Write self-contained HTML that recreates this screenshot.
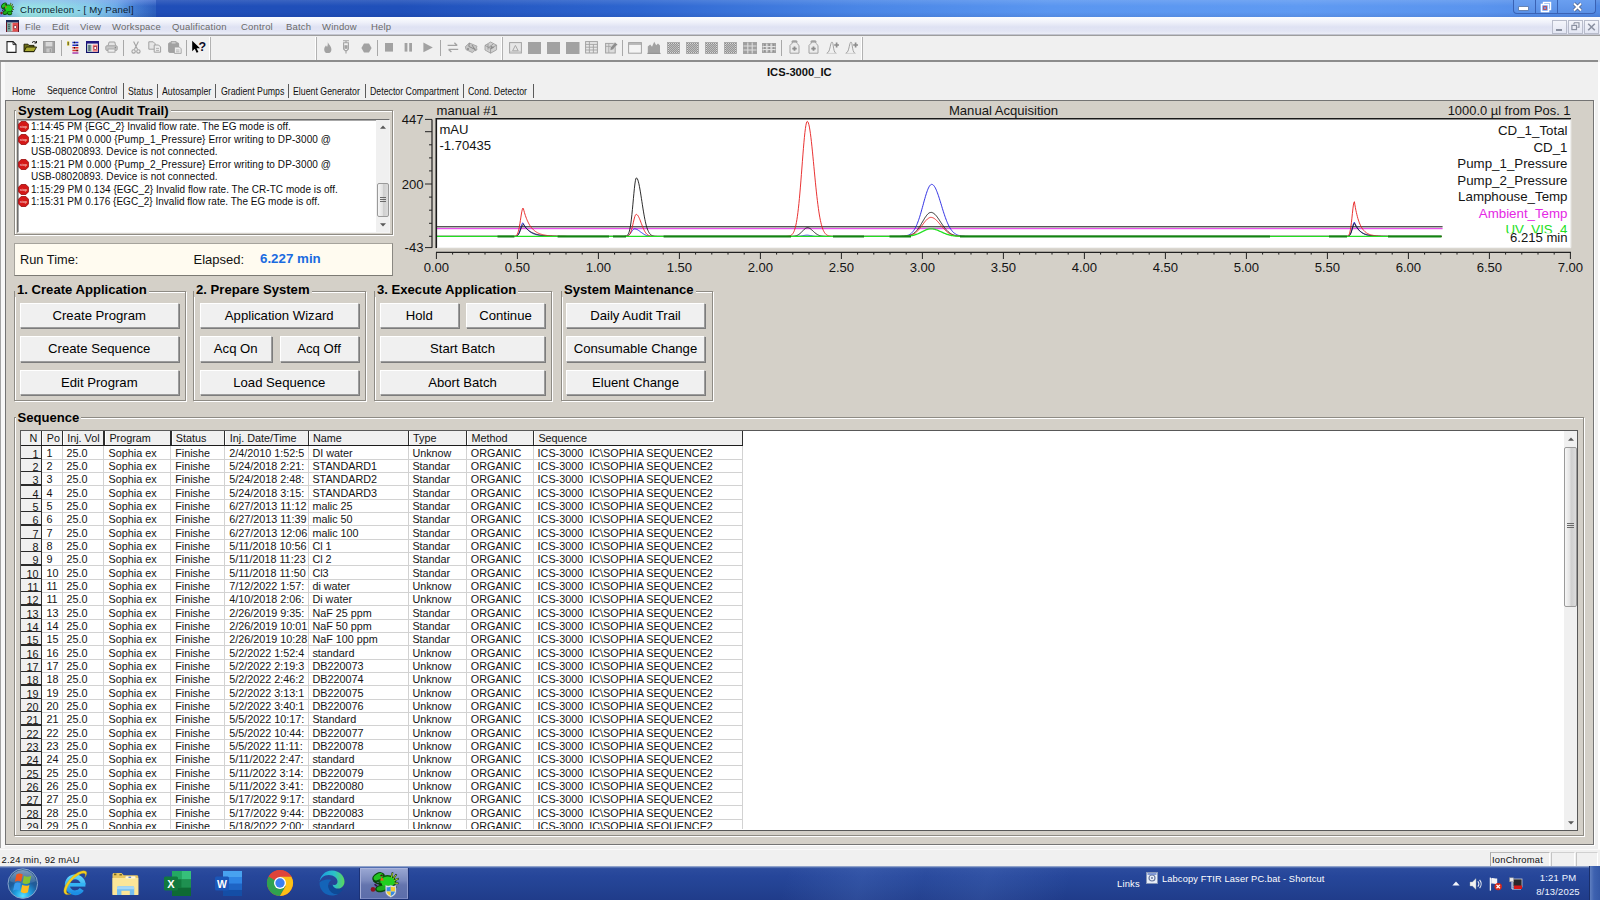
<!DOCTYPE html>
<html lang="en">
<head>
<meta charset="utf-8">
<title>Chromeleon - [ My Panel]</title>
<style>
*{box-sizing:border-box;margin:0;padding:0}
html,body{width:1600px;height:900px;overflow:hidden;background:#f0f0f0}
body{position:relative;font-family:"Liberation Sans",Arial,sans-serif;color:#000;font-size:10px}
.abs,.abs>*{position:absolute}
div,span,svg{position:absolute;white-space:nowrap}
/* ---------- title bar ---------- */
#title{left:0;top:0;width:1600px;height:17px;background:linear-gradient(90deg,#2858c2 0px,#204eb8 150px,#2050ba 400px,#2e66d0 640px,#4a86e6 860px,#5a96f0 1050px,#5f9af2 1300px,#5a94ee 1480px,#4f88e4 1600px)}
#title .glow{left:0;top:0;width:156px;height:17px;background:linear-gradient(180deg,rgba(110,150,235,.45) 0,rgba(120,190,235,.15) 6px,rgba(150,240,225,.12) 17px),linear-gradient(90deg,#6e88e0 0,#84c0e8 9px,#9ee6e6 22px,#98e0e6 60px,#86caea 92px,rgba(112,174,236,.92) 116px,rgba(80,140,225,.5) 136px,rgba(50,100,205,0) 154px)}
#title .shade{left:0;top:0;width:1600px;height:17px;background:linear-gradient(180deg,rgba(255,255,255,.12) 0,rgba(255,255,255,0) 6px,rgba(0,0,40,0) 12px,rgba(0,0,60,.10) 18px)}
#title .txt{left:20px;top:2.500px;font-size:9.6px;line-height:13px;color:#0c1c30;letter-spacing:.21px}
/* ---------- menu bar ---------- */
#menu{left:0;top:17px;width:1600px;height:18px;background:linear-gradient(180deg,#fcfdff 0,#f0f2fa 5px,#dfe2f3 10px,#e2e5f4 14px,#eef0f8 18px)}
#menu span{top:3.500px;font-size:9.5px;line-height:12px;color:#6a6a6a;letter-spacing:.18px}
#menuline{left:0;top:34px;width:1600px;height:3px;background:linear-gradient(180deg,#c2c4d0 0,#c2c4d0 1px,#9e9e9e 1px,#9e9e9e 2px,#fbfbfb 2px)}
/* ---------- toolbar ---------- */
#tb{left:0;top:36px;width:1600px;height:25px;background:#f0f0f0}
#tbline{left:0;top:60px;width:1598px;height:2px;background:#8c8c8c}
.tsep{top:40px;width:1px;height:16px;background:#a8a8a8}
.tsplit{top:37px;width:1px;height:23px;background:#b2b2b2;box-shadow:-1px 0 0 #fff}
/* ---------- panel ---------- */
#pan{left:2px;top:62px;width:1596px;height:787px;background:#f0f0f0}
#edgeL{left:0;top:62px;width:5px;height:786px;background:linear-gradient(90deg,#a4a4a4 0,#a4a4a4 1.4px,#f8f8f8 1.5px)}
#main{left:5px;top:100px;width:1589px;height:745px;background:#d4d0c8;border:1px solid #747474;box-shadow:1px 1px 0 #fff}
.tab{top:85px;font-size:10.6px;line-height:12px;color:#111;transform-origin:0 0;transform:scaleX(.828)}
.tabsep{top:84px;width:1px;height:14px;background:#5a5a5a}
.gb{border:1px solid #8e8b84;box-shadow:1px 1px 0 #fff, inset 1px 1px 0 #fff}
.gbt{font-weight:bold;font-size:13.1px;line-height:15px;background:#d4d0c8;padding:0 2px 0 2px}
.btn{background:#f0f0f0;border-top:1px solid #fff;border-left:1px solid #fff;border-right:1px solid #9c9c9c;border-bottom:1px solid #9c9c9c;box-shadow:1px 1px 0 #7c7c7c;font-size:13.15px;text-align:center;color:#000}
.btn span{position:static}
.lg{left:31px;font-size:10px;line-height:12.5px;color:#0c0c0c}
#tbl span,#tbl div{font-size:10.8px;line-height:13.33px;color:#141414}
#tbl .hl{left:20px;width:701.500px;height:1px;background:#d2d2d2}
#tbl .hd{left:0;width:20.500px;height:1.400px;background:#2a2a2a}
#tbl .vl{top:14.500px;width:1px;height:400px;background:#d2d2d2}
#tbl .vh{top:0;width:1.300px;height:14.500px;background:#2e2e2e;box-shadow:1px 0 0 #fff}
#tbl .vd{top:14px;width:1px;height:400px;background:#2e2e2e}
#tbl .th{top:1.200px}
#tbl .tr{left:0;width:722px;height:13.33px}
#tbl .tr span{top:.4px}
#tbl .tr .rn{left:0;width:17.500px;text-align:right;top:1.600px}
#tbl i{font-style:normal;color:transparent}
/* ---------- status/taskbar ---------- */
#status{left:0;top:849px;width:1600px;height:18px;background:#f0f0f0}
#task{left:0;top:866px;width:1600px;height:34px;background:linear-gradient(180deg,#b4c0d8 0,#5d78b6 1.2px,#2c4c9e 2.600px,#26469a 10px,#234292 22px,#203c8a 34px)}
</style>
</head>
<body>
<!-- ================= TITLE BAR ================= -->
<div id="title">
  <div class="glow"></div><div class="shade"></div>
  <svg style="left:0;top:1.500px" width="14.500" height="14.500" viewBox="0 0 30 24" preserveAspectRatio="none">
  <g>
    <ellipse cx="8.500" cy="6.200" rx="6.600" ry="4.600" transform="rotate(-28 8.500 6.200)" fill="#0a4a0c"/>
    <ellipse cx="17.400" cy="11" rx="9" ry="7" fill="#0c5a0e"/>
    <ellipse cx="11.500" cy="17.400" rx="6.600" ry="3.800" transform="rotate(-12 11.500 17.400)" fill="#0a4a0c"/>
    <path d="M21 8l1.600-6.600M22.500 8.500l4-5.200M23.500 10l5.200-2.600M23.500 12l5 .4M22.500 14l4 2.400" stroke="#0c300c" stroke-width="1.700"/>
    <path d="M21 8l1.500-5.800M22.500 8.500l3.600-4.600M23.500 10l4.600-2.200M23.500 12l4.400.4" stroke="#c8ec28" stroke-width=".9"/>
    <ellipse cx="8.300" cy="5.800" rx="5" ry="2.900" transform="rotate(-28 8.300 5.800)" fill="#22c422"/>
    <ellipse cx="17.600" cy="10.800" rx="7.200" ry="5.400" fill="#20d020"/>
    <ellipse cx="11.500" cy="17.200" rx="5" ry="2.300" transform="rotate(-12 11.500 17.200)" fill="#1cac1c"/>
    <path d="M3.400 9.600c2.200 2.600 5 3.800 8.600 3.800" fill="none" stroke="#0a3a0a" stroke-width="1.600"/>
    <path d="M10 9.400l1.900-3.600 1.900 3.600z" fill="#f05a18"/>
    <path d="M9.800 5.200l1.600-2 1.800 1.800z" fill="#501010"/>
    <circle cx="3" cy="18.400" r="2.300" fill="#8c1422"/>
    <path d="M4.600 13.200l2.400 2.200" stroke="#3a1450" stroke-width="1.800"/>
  </g>
    <ellipse cx="20" cy="18.500" rx="5" ry="3.600" fill="#0c5a0e"/><ellipse cx="20" cy="18" rx="3.600" ry="2.400" fill="#1cb41c"/>
  </svg>
  <span class="txt">Chromeleon - [ My Panel]</span>
  <!-- caption buttons -->
  <div style="left:1513px;top:0;width:83px;height:14px;border:1px solid #3a62b4;border-top:none;border-radius:0 0 4px 4px;background:linear-gradient(180deg,#6a9ff0,#5a90e6)"></div>
  <div style="left:1535px;top:0;width:1px;height:14px;background:#3a62b4"></div>
  <div style="left:1557px;top:0;width:1px;height:14px;background:#3a62b4"></div>
  <div style="left:1519px;top:7px;width:9px;height:3px;background:#fff;border:0;box-shadow:0 0 0 .6px #6a7890"></div>
  <svg style="left:1540px;top:1px" width="12" height="12" viewBox="0 0 12 12"><rect x="3.5" y="1.5" width="7" height="7" fill="none" stroke="#fff" stroke-width="1.4"/><rect x="1.5" y="3.5" width="7" height="7" fill="#6a9af0" stroke="#fff" stroke-width="1.6"/><rect x="3.6" y="5.6" width="2.8" height="2.8" fill="none" stroke="#c04848" stroke-width=".9"/></svg>
  <svg style="left:1572px;top:2px" width="11" height="10" viewBox="0 0 11 10"><path d="M2 1.500l7 7M9 1.500l-7 7" stroke="#4a5c82" stroke-width="3.400"/><path d="M2 1.500l7 7M9 1.500l-7 7" stroke="#fff" stroke-width="2"/></svg>
</div>
<!-- ================= MENU BAR ================= -->
<div id="menu">
  <svg style="left:6px;top:2.500px" width="13" height="12.500" viewBox="0 0 13 13" preserveAspectRatio="none">
    <rect x=".5" y=".5" width="12" height="12" fill="#e8e0e0" stroke="#6a1020"/>
    <rect x="0" y="0" width="13" height="2.6" fill="#1a2a58"/>
    <rect x="1" y="3" width="4.5" height="9" fill="#7fa7a0"/>
    <rect x="6.5" y="3" width="5.5" height="9" fill="#e05050"/>
    <rect x="8" y="6" width="2.5" height="3" fill="#fff" stroke="#701020" stroke-width=".6"/>
    <path d="M2 5h2M2 7h2M2 9h2" stroke="#244" stroke-width=".8"/>
  </svg>
  <span style="left:25px">File</span>
  <span style="left:52px">Edit</span>
  <span style="left:80px">View</span>
  <span style="left:112px">Workspace</span>
  <span style="left:172px">Qualification</span>
  <span style="left:241px">Control</span>
  <span style="left:286px">Batch</span>
  <span style="left:322px">Window</span>
  <span style="left:371px">Help</span>
  <!-- MDI child buttons -->
  <div style="left:1552px;top:3px;width:15px;height:14px;border:1px solid #b8bccb;background:linear-gradient(180deg,#f4f5fb,#e3e6f3)"></div>
  <div style="left:1568px;top:3px;width:15px;height:14px;border:1px solid #b8bccb;background:linear-gradient(180deg,#f4f5fb,#e3e6f3)"></div>
  <div style="left:1584px;top:3px;width:15px;height:14px;border:1px solid #b8bccb;background:linear-gradient(180deg,#f4f5fb,#e3e6f3)"></div>
  <div style="left:1556px;top:12px;width:6px;height:1.600px;background:#8a90a0"></div>
  <svg style="left:1571px;top:5px" width="9" height="9" viewBox="0 0 9 9"><path d="M3 .8h5v4.4H6.4M3 .8v1.6" fill="none" stroke="#8a90a0" stroke-width="1.1"/><rect x=".9" y="3.4" width="4.6" height="4.2" fill="none" stroke="#8a90a0" stroke-width="1.2"/></svg>
  <svg style="left:1587px;top:6px" width="9" height="8" viewBox="0 0 9 8"><path d="M1.2 .8l6.6 6.4M7.8 .8L1.2 7.2" stroke="#8a90a0" stroke-width="1.6"/></svg>
</div>
<div id="menuline"></div>
<!-- ================= TOOLBAR ================= -->
<div id="tb"></div>
<div id="tbline"></div>
<div id="edgeL"></div>
<!-- ================= TOOLBAR ICONS ================= -->
<svg style="left:6px;top:41px" width="11" height="12" viewBox="0 0 11 12"><path d="M1 .6h6l3 3v7.8H1z" fill="#fff" stroke="#222" stroke-width="1.1"/><path d="M7 .6v3h3" fill="none" stroke="#222" stroke-width=".9"/></svg>
<svg style="left:23px;top:40px" width="15" height="13" viewBox="0 0 15 13"><path d="M1 4.2h4l1 1.2h5v6.2H1z" fill="#6e6e18" stroke="#1a1a00" stroke-width=".9"/><path d="M1 11.6l2.4-4.6h10.2l-2.6 4.6z" fill="#a8a830" stroke="#1a1a00" stroke-width=".9"/><path d="M9 2.6c1.6-1.6 3.4-1.4 4.2.2M13.4 1v2h-2" fill="none" stroke="#111" stroke-width="1"/></svg>
<svg style="left:43px;top:41px" width="12" height="12" viewBox="0 0 12 12"><rect x=".5" y=".5" width="11" height="11" fill="#a4a4a4" stroke="#9a9a9a"/><rect x="2.6" y="1" width="6.8" height="4.4" fill="#d8d8d8"/><rect x="3.4" y="7.4" width="5.4" height="4" fill="#c8c8c8"/><rect x="6.6" y="8" width="1.5" height="3" fill="#a0a0a0"/></svg>
<div class="tsep" style="left:61px"></div>
<svg style="left:66px;top:41px" width="14" height="13" viewBox="0 0 14 13"><rect x="1" y="0.4" width="2.4" height="4.2" fill="#e8d838"/><path d="M2.2 .8v3.4" stroke="#333" stroke-width=".9"/><path d="M6.4 1.6h6M6.4 4.2h6" stroke="#2030c8" stroke-width="1.5"/><path d="M6.4 6.8h6M6.4 9.4h6" stroke="#e03030" stroke-width="1.5"/><path d="M6.4 12h6" stroke="#a020a0" stroke-width="1.3"/><path d="M8 1.6h1M10.6 4.2h1M8 6.8h1M10.6 9.4h1" stroke="#111" stroke-width="1.5"/></svg>
<svg style="left:86px;top:41px" width="13" height="12" viewBox="0 0 13 12"><rect x=".6" y=".6" width="11.8" height="10.8" fill="#fff" stroke="#10106a" stroke-width="1.2"/><rect x="0" y="0" width="13" height="2.6" fill="#201880"/><rect x="1.6" y="3.6" width="4" height="7" fill="#88b0a8"/><rect x="6.6" y="3.6" width="5" height="7" fill="#f08080"/><rect x="8" y="5.6" width="2.4" height="3" fill="#fff" stroke="#801020" stroke-width=".6"/><path d="M2.4 5h2M2.4 7h2M2.4 9h2" stroke="#223" stroke-width=".8"/></svg>
<svg style="left:105px;top:41px" width="13" height="12" viewBox="0 0 13 12"><path d="M3 4.6l1.2-3.6h5.6l.8 3.6" fill="#e4e4e4" stroke="#a2a2a2" stroke-width="1"/><rect x=".8" y="4.8" width="11.4" height="4.6" rx="1" fill="#c8c8c8" stroke="#a2a2a2"/><rect x="3" y="8" width="7" height="3.2" fill="#eee" stroke="#a2a2a2" stroke-width=".9"/><circle cx="10.4" cy="6.6" r=".8" fill="#888"/></svg>
<div class="tsep" style="left:123px"></div>
<svg style="left:131px;top:41px" width="10" height="13" viewBox="0 0 10 13"><path d="M2.6 .6l4 8M7.4 .6l-4 8" stroke="#a2a2a2" stroke-width="1.1" fill="none"/><circle cx="2.6" cy="10.4" r="1.7" fill="none" stroke="#a2a2a2" stroke-width="1.1"/><circle cx="7.4" cy="10.4" r="1.7" fill="none" stroke="#a2a2a2" stroke-width="1.1"/></svg>
<svg style="left:148px;top:41px" width="14" height="12" viewBox="0 0 14 12"><path d="M.8 .8h4.4l2 2v5.4H.8z" fill="#e6e6e6" stroke="#a2a2a2"/><path d="M6.2 4h4.4l2 2v5.2H6.2z" fill="#ececec" stroke="#a2a2a2"/><path d="M8 7.4h3M8 9.4h3" stroke="#a2a2a2" stroke-width=".8"/></svg>
<svg style="left:168px;top:41px" width="14" height="13" viewBox="0 0 14 13"><rect x=".6" y="1.8" width="10" height="9.6" rx="1" fill="#a2a2a2" stroke="#a2a2a2"/><rect x="3.2" y=".4" width="4.8" height="2.6" fill="#ccc" stroke="#a2a2a2" stroke-width=".8"/><path d="M6.4 6h5l1.8 1.8v4.6H6.4z" fill="#eee" stroke="#a2a2a2" stroke-width=".9"/><path d="M8 9h3.4M8 10.8h3.4" stroke="#a2a2a2" stroke-width=".7"/></svg>
<div class="tsep" style="left:186px"></div>
<svg style="left:191px;top:40px" width="16" height="14" viewBox="0 0 16 14"><path d="M1.2 .8v10.4l2.6-2.4 1.8 4 1.8-.8-1.8-3.8h3.4z" fill="#000"/><text x="7.600" y="11.400" font-family="Liberation Sans,sans-serif" font-weight="bold" font-size="12.500" fill="#0a0a28">?</text></svg>
<div class="tsplit" style="left:210px"></div>
<div class="tsplit" style="left:316px"></div>
<svg style="left:323px;top:41px" width="10" height="13" viewBox="0 0 10 13"><path d="M4.6 .6c.4 2.4 3.8 4.4 3.8 7.8a3.6 3.6 0 0 1-7.2 0c0-2 1.2-3 1.8-4.2.4 1 .8 1.4 1.2 1.6.6-1.6.8-3.400.4-5.200z" fill="#a2a2a2"/></svg>
<svg style="left:341px;top:40px" width="10" height="14" viewBox="0 0 10 14"><path d="M2 .8h6M5 .8v2M2.6 2.800h4.800v6.200l-1.600 1.600h-1.600l-1.600-1.600zM5 10.600v3" fill="none" stroke="#a2a2a2" stroke-width="1.100"/><rect x="3.4" y="5.2" width="3.2" height="3.600" fill="#a2a2a2"/></svg>
<svg style="left:361px;top:43px" width="11" height="10" viewBox="0 0 11 10"><path d="M3 .4h5l2.600 4.600-2.600 4.600h-5l-2.600-4.600z" fill="#a2a2a2"/></svg>
<div class="tsep" style="left:377px"></div>
<svg style="left:385px;top:43px" width="8" height="9" viewBox="0 0 8 9"><rect x="0" y="0" width="8" height="8.600" fill="#a2a2a2"/></svg>
<svg style="left:404px;top:43px" width="9" height="9" viewBox="0 0 9 9"><rect x=".6" y="0" width="2.800" height="8.600" fill="#a2a2a2"/><rect x="5.2" y="0" width="2.800" height="8.600" fill="#a2a2a2"/></svg>
<svg style="left:423px;top:42px" width="10" height="11" viewBox="0 0 10 11"><path d="M.4 .6l9.400 4.800-9.400 4.800z" fill="#a2a2a2"/></svg>
<div class="tsep" style="left:440px"></div>
<svg style="left:447px;top:42px" width="12" height="11" viewBox="0 0 12 11"><path d="M.6 3.400h9.600M7.400 .8l2.800 2.600M11.200 7.400h-9.600M4.400 10l-2.800-2.600" fill="none" stroke="#a2a2a2" stroke-width="1.300"/></svg>
<svg style="left:464px;top:41px" width="15" height="13" viewBox="0 0 15 13"><path d="M1.400 5.600l4-3.600 7.600 3.200-1 3.200-3.600 3.200-6.400-3z" fill="#c6c6c6" stroke="#a2a2a2" stroke-width=".9"/><path d="M5.400 2l-.6 3.400 6.200 3M8 4l3.600 5.600 1.800-1.400" fill="none" stroke="#8a8a8a" stroke-width="1"/><circle cx="4" cy="8" r="1" fill="#888"/></svg>
<svg style="left:484px;top:41px" width="14" height="13" viewBox="0 0 14 13"><path d="M1 4.400l5.600-3.400 6 3.200v4.600l-6 3.400-5.600-3.200z" fill="#d0d0d0" stroke="#a2a2a2" stroke-width=".9"/><path d="M1 4.400l5.600 3 6-3.200M6.600 7.400v4.800M4 3v5.600M9.400 2.800l-5 4" fill="none" stroke="#909090" stroke-width=".8"/><path d="M6.600 4.600l3.600 2-3.600 2z" fill="#8c8c8c"/></svg>
<div class="tsplit" style="left:502px"></div>
<svg style="left:509px;top:42px" width="13" height="12" viewBox="0 0 13 12"><rect x=".6" y=".6" width="11.800" height="10.400" fill="#e6e6e6" stroke="#a2a2a2" stroke-width="1"/><path d="M6.400 3.400l2.800 5.400h-5.600z" fill="none" stroke="#a2a2a2" stroke-width=".9"/><path d="M.6 9.400h11.800" stroke="#bbb" stroke-width=".6"/></svg>
<svg style="left:527.5px;top:41.5px" width="13.5" height="12.3" viewBox="0 0 13.5 12.3"><rect width="13.500" height="12.300" fill="#a2a2a2"/></svg>
<svg style="left:546.7px;top:41.5px" width="13.5" height="12.3" viewBox="0 0 13.5 12.3"><rect width="13.500" height="12.300" fill="#a2a2a2"/></svg>
<svg style="left:566px;top:41.5px" width="13.5" height="12.3" viewBox="0 0 13.5 12.3"><rect width="13.500" height="12.300" fill="#a2a2a2"/></svg>
<svg style="left:585px;top:41px" width="13" height="13" viewBox="0 0 13 13"><rect x=".6" y=".6" width="11.800" height="11.400" fill="#e8e8e8" stroke="#a2a2a2" stroke-width="1"/><path d="M.6 3.400h11.800M.6 6.200h11.800M.6 9h11.800M4.400 .6v11.400M8.400 3.400v8.600" stroke="#a2a2a2" stroke-width=".9" fill="none"/></svg>
<svg style="left:605px;top:41px" width="13" height="13" viewBox="0 0 13 13"><rect x=".6" y="2.400" width="9.600" height="9.600" fill="#dcdcdc" stroke="#a2a2a2" stroke-width="1"/><path d="M.6 5.400h9.600M3.800 2.400v9.600" stroke="#a2a2a2" stroke-width=".8"/><path d="M5.400 6.600l4.600-5.400 2.600 2.200-4.600 5.400-3 .8z" fill="#8e8e8e" stroke="#e6e6e6" stroke-width=".6"/></svg>
<div class="tsep" style="left:622px"></div>
<svg style="left:628px;top:42px" width="14" height="12" viewBox="0 0 14 12"><rect x=".6" y=".6" width="12.800" height="10.600" fill="#f4f4f4" stroke="#a2a2a2" stroke-width="1"/><path d="M.6 2h12.800" stroke="#a2a2a2" stroke-width="1.400"/></svg>
<svg style="left:647px;top:41px" width="14" height="13" viewBox="0 0 14 13"><path d="M.8 12.400V5.400l2.400-2 1.800 2.400 2.200-5 2 3.400 1.800-1.600 2 2v7.800z" fill="#a2a2a2"/><path d="M.4 12.400h13.200" stroke="#8e8e8e" stroke-width="1"/></svg>
<svg style="left:0;top:0" width="0" height="0"><defs><pattern id="dz" width="2" height="2" patternUnits="userSpaceOnUse"><rect width="2" height="2" fill="#d8d8d8"/><rect width="1" height="1" fill="#8c8c8c"/><rect x="1" y="1" width="1" height="1" fill="#8c8c8c"/></pattern></defs></svg>
<svg style="left:667px;top:42px" width="13" height="12" viewBox="0 0 13 12"><rect x=".5" y=".5" width="12" height="11" fill="url(#dz)" stroke="#a2a2a2" stroke-width=".8"/><rect x="2" y="2" width="9" height="8" fill="#a4a4a4" opacity=".55"/></svg>
<svg style="left:686px;top:42px" width="13" height="12" viewBox="0 0 13 12"><rect x=".5" y=".5" width="12" height="11" fill="url(#dz)" stroke="#a2a2a2" stroke-width=".8"/><rect x="2" y="2" width="9" height="8" fill="#a4a4a4" opacity=".55"/></svg>
<svg style="left:705px;top:42px" width="13" height="12" viewBox="0 0 13 12"><rect x=".5" y=".5" width="12" height="11" fill="url(#dz)" stroke="#a2a2a2" stroke-width=".8"/><rect x="2" y="2" width="9" height="8" fill="#a4a4a4" opacity=".55"/></svg>
<svg style="left:724px;top:42px" width="13" height="12" viewBox="0 0 13 12"><rect x=".5" y=".5" width="12" height="11" fill="url(#dz)" stroke="#a2a2a2" stroke-width=".8"/><rect x="2" y="2" width="9" height="8" fill="#a4a4a4" opacity=".55"/></svg>
<svg style="left:743px;top:42px" width="14" height="12" viewBox="0 0 14 12"><rect x=".5" y=".5" width="13" height="11" fill="#a0a0a0" stroke="#a2a2a2"/><path d="M.5 4h13M.5 8h13M4.800 .5v11M9.200 .5v11" stroke="#dedede" stroke-width="1.100"/></svg>
<svg style="left:762px;top:42px" width="14" height="12" viewBox="0 0 14 12"><rect x=".5" y="1.500" width="13" height="9" fill="#b0b0b0" stroke="#a2a2a2"/><path d="M.5 4.600h13M.5 7.600h13M4.800 1.500v9M9.200 1.500v9" stroke="#e2e2e2" stroke-width="1.100"/><path d="M2 3h1.600M6.400 3h1.600M10.800 3h1.600M2 6h1.600M6.400 6h1.600M10.800 6h1.600M2 9h1.600M6.400 9h1.600M10.800 9h1.600" stroke="#777" stroke-width="1.200"/></svg>
<div class="tsep" style="left:781px"></div>
<svg style="left:788.5px;top:40px" width="11" height="14" viewBox="0 0 11 14"><path d="M3.400 .8h4.200v2.200l2.400 2.400v7.800H1V5.400l2.400-2.400z" fill="#ececec" stroke="#a2a2a2" stroke-width="1"/><path d="M2.600 1.800h5.800" stroke="#a2a2a2" stroke-width="1.600"/><path d="M5.500 6.400v4.400M3.300 8.600h4.400" stroke="#8c8c8c" stroke-width="1.800"/></svg>
<svg style="left:807.5px;top:40px" width="11" height="14" viewBox="0 0 11 14"><path d="M3.400 .8h4.200v2.200l2.400 2.400v7.800H1V5.400l2.400-2.400z" fill="#ececec" stroke="#a2a2a2" stroke-width="1"/><path d="M2.600 1.800h5.800" stroke="#a2a2a2" stroke-width="1.600"/><path d="M5.500 6.400v4.400M3.300 8.600h4.400" stroke="#8c8c8c" stroke-width="1.800"/></svg>
<svg style="left:825.5px;top:41px" width="14" height="13" viewBox="0 0 14 13"><path d="M.8 12.200c2-.6 2.600-3 3.400-6.400.6-2.600 1-4.800 1.800-4.800.8 0 1 2.400 1.400 5 .4 2.400.8 5 2.400 6.200" fill="none" stroke="#a2a2a2" stroke-width="1"/><path d="M10.600 1.600v4.800M8.200 4h4.800" stroke="#8c8c8c" stroke-width="1.700"/><path d="M.6 12.400h10" stroke="#bbb" stroke-width=".6"/></svg>
<svg style="left:844.5px;top:41px" width="14" height="13" viewBox="0 0 14 13"><path d="M.8 12.200c2-.6 2.600-3 3.400-6.400.6-2.600 1-4.800 1.800-4.800.8 0 1 2.400 1.400 5 .4 2.400.8 5 2.400 6.200" fill="none" stroke="#a2a2a2" stroke-width="1"/><path d="M10.600 1.600v4.800M8.200 4h4.800" stroke="#8c8c8c" stroke-width="1.700"/><path d="M.6 12.400h10" stroke="#bbb" stroke-width=".6"/></svg>
<div class="tsplit" style="left:862px"></div>
<!-- ================= PANEL HEADER + TABS ================= -->
<div id="edgeR" style="left:1598px;top:62px;width:2px;height:787px;background:#fff"></div>
<span style="left:767px;top:66px;font-size:11.2px;line-height:13px;font-weight:bold;color:#111">ICS-3000_IC</span>
<span class="tab" style="left:11.5px">Home</span>
<div style="left:39px;top:82px;width:84px;height:19px;background:#f0f0f0"></div>
<span class="tab" style="left:47px;top:83.800px">Sequence Control</span>
<div class="tabsep" style="left:123px;top:83px;height:15.500px"></div>
<span class="tab" style="left:128px">Status</span>
<div class="tabsep" style="left:156.500px"></div>
<span class="tab" style="left:162px">Autosampler</span>
<div class="tabsep" style="left:215px"></div>
<span class="tab" style="left:221px">Gradient Pumps</span>
<div class="tabsep" style="left:287.500px"></div>
<span class="tab" style="left:293px">Eluent Generator</span>
<div class="tabsep" style="left:364.500px"></div>
<span class="tab" style="left:370px">Detector Compartment</span>
<div class="tabsep" style="left:462.500px"></div>
<span class="tab" style="left:468px">Cond. Detector</span>
<div class="tabsep" style="left:532.500px"></div>
<!-- ================= MAIN GRAY PANEL ================= -->
<div id="main"></div>
<!-- System Log group -->
<div class="gb" style="left:14px;top:110px;width:379px;height:125px"></div>
<span class="gbt" style="left:16px;top:103px">System Log (Audit Trail)</span>
<div id="log" style="left:17px;top:119px;width:373px;height:114px;background:#fff;border-top:1px solid #6e6e6e;border-left:1px solid #6e6e6e;border-right:1px solid #f4f4f4;border-bottom:1px solid #f4f4f4;box-shadow:inset 1px 1px 0 #a8a8a8;overflow:hidden"></div>
<!-- Run time -->
<div style="left:14px;top:243px;width:379px;height:33px;background:#fffbf0;border-top:1px solid #a6a39c;border-left:1px solid #a6a39c;border-right:1px solid #8a8882;border-bottom:1px solid #7c7a74"></div>
<span style="left:20px;top:251.500px;font-size:12.8px;line-height:15px;color:#111">Run Time:</span>
<span style="left:193.500px;top:251.500px;font-size:13px;line-height:15px;color:#111">Elapsed:</span>
<span style="left:260px;top:251px;font-size:13.33px;line-height:15px;font-weight:bold;color:#1a6be0">6.227 min</span>
<!-- ================= LOG LINES ================= -->
<svg style="left:18.300px;top:121.2px" width="11" height="11" viewBox="0 0 12 12"><path d="M3.600 .4h4.800l3.200 3.200v4.800l-3.200 3.200h-4.800l-3.200-3.200v-4.800z" fill="#d41818" stroke="#8a0c0c" stroke-width=".8"/><text x="6" y="7.300" text-anchor="middle" font-size="3.600" font-family="Liberation Sans,sans-serif" fill="#f6c0c0" font-weight="bold">stop</text></svg>
<span class="lg" style="top:121.4px;letter-spacing:0px">1:14:45 PM {EGC_2} Invalid flow rate. The EG mode is off.</span>
<svg style="left:18.300px;top:133.7px" width="11" height="11" viewBox="0 0 12 12"><path d="M3.600 .4h4.800l3.200 3.200v4.800l-3.200 3.200h-4.800l-3.200-3.200v-4.800z" fill="#d41818" stroke="#8a0c0c" stroke-width=".8"/><text x="6" y="7.300" text-anchor="middle" font-size="3.600" font-family="Liberation Sans,sans-serif" fill="#f6c0c0" font-weight="bold">stop</text></svg>
<span class="lg" style="top:133.9px;letter-spacing:0.097px">1:15:21 PM 0.000 {Pump_1_Pressure} Error writing to DP-3000 @</span>
<span class="lg" style="top:146.4px;letter-spacing:0.1px">USB-08020893. Device is not connected.</span>
<svg style="left:18.300px;top:158.7px" width="11" height="11" viewBox="0 0 12 12"><path d="M3.600 .4h4.800l3.200 3.200v4.800l-3.200 3.200h-4.800l-3.200-3.200v-4.800z" fill="#d41818" stroke="#8a0c0c" stroke-width=".8"/><text x="6" y="7.300" text-anchor="middle" font-size="3.600" font-family="Liberation Sans,sans-serif" fill="#f6c0c0" font-weight="bold">stop</text></svg>
<span class="lg" style="top:158.9px;letter-spacing:0.097px">1:15:21 PM 0.000 {Pump_2_Pressure} Error writing to DP-3000 @</span>
<span class="lg" style="top:171.4px;letter-spacing:0.1px">USB-08020893. Device is not connected.</span>
<svg style="left:18.300px;top:183.7px" width="11" height="11" viewBox="0 0 12 12"><path d="M3.600 .4h4.800l3.200 3.200v4.800l-3.200 3.200h-4.800l-3.200-3.200v-4.800z" fill="#d41818" stroke="#8a0c0c" stroke-width=".8"/><text x="6" y="7.300" text-anchor="middle" font-size="3.600" font-family="Liberation Sans,sans-serif" fill="#f6c0c0" font-weight="bold">stop</text></svg>
<span class="lg" style="top:183.9px;letter-spacing:0.04px">1:15:29 PM 0.134 {EGC_2} Invalid flow rate. The CR-TC mode is off.</span>
<svg style="left:18.300px;top:196.2px" width="11" height="11" viewBox="0 0 12 12"><path d="M3.600 .4h4.800l3.200 3.200v4.800l-3.200 3.200h-4.800l-3.200-3.200v-4.800z" fill="#d41818" stroke="#8a0c0c" stroke-width=".8"/><text x="6" y="7.300" text-anchor="middle" font-size="3.600" font-family="Liberation Sans,sans-serif" fill="#f6c0c0" font-weight="bold">stop</text></svg>
<span class="lg" style="top:196.4px;letter-spacing:0.02px">1:15:31 PM 0.176 {EGC_2} Invalid flow rate. The EG mode is off.</span>
<div style="left:376px;top:120px;width:13px;height:112px;background:#f0f0f0"></div>
<svg style="left:379.500px;top:124.500px" width="6" height="4" viewBox="0 0 6 4"><path d="M0 3.800l3-3.400 3 3.400z" fill="#585858"/></svg>
<svg style="left:379.500px;top:222.500px" width="6" height="4" viewBox="0 0 6 4"><path d="M0 .2l3 3.400 3-3.400z" fill="#585858"/></svg>
<div style="left:376.500px;top:182.500px;width:12px;height:34px;border:1px solid #9a9a9a;border-radius:2px;background:linear-gradient(90deg,#f6f6f6,#e2e2e2 45%,#cfcfcf 55%,#dcdcdc)"></div>
<div style="left:379.500px;top:197px;width:6px;height:1px;background:#6a6a6a;box-shadow:0 2px 0 #6a6a6a,0 4px 0 #6a6a6a"></div>
<!-- ================= CHART ================= -->
<svg id="chart" style="left:395px;top:100px" width="1205" height="180" viewBox="0 0 1205 180" font-family="Liberation Sans,Arial,sans-serif" font-size="13.100" fill="#141414">
<rect x="41.4" y="18.6" width="1134.0" height="129.0" fill="#fff"/>
<path d="M41.4 128.7H1047.6" stroke="#e428e4" stroke-width="1" fill="none"/>
<path d="M41.4 126.8H1047.6" stroke="#101010" stroke-width="1" fill="none"/>
<path d="M41.4 136.4 L119.4 136.4 L119.9 136.4 L120.4 136.3 L120.9 136.2 L121.4 136.1 L121.9 135.9 L122.4 135.5 L122.9 135.0 L123.4 134.2 L123.9 133.2 L124.4 132.0 L124.9 130.5 L125.4 128.8 L125.9 127.1 L126.4 125.5 L126.9 124.2 L127.4 123.2 L127.9 122.8 L128.4 123.6 L128.9 124.6 L129.4 125.4 L129.9 126.2 L130.4 127.0 L130.9 127.7 L131.4 128.3 L131.9 128.9 L132.4 129.5 L132.9 130.0 L133.4 130.5 L133.9 130.9 L134.4 131.3 L134.9 131.7 L135.4 132.0 L135.9 132.4 L136.4 132.7 L136.9 132.9 L137.4 133.2 L137.9 133.4 L138.4 133.7 L138.9 133.9 L139.4 134.0 L139.9 134.2 L140.4 134.4 L140.9 134.5 L141.4 134.7 L141.9 134.8 L142.4 134.9 L142.9 135.0 L143.4 135.1 L143.9 135.2 L144.4 135.3 L144.9 135.4 L145.4 135.5 L145.9 135.5 L146.4 135.6 L146.9 135.7 L147.4 135.7 L147.9 135.8 L148.4 135.8 L148.9 135.9 L149.4 135.9 L149.9 135.9 L150.4 136.0 L150.9 136.0 L151.4 136.0 L151.9 136.1 L152.4 136.1 L152.9 136.1 L153.4 136.1 L153.9 136.1 L154.9 136.2 L155.9 136.2 L156.9 136.2 L157.9 136.3 L159.4 136.3 L160.9 136.3 L162.9 136.3 L165.4 136.4 L169.9 136.4 L187.4 136.4 L229.4 136.4 L229.9 136.4 L230.4 136.3 L230.9 136.3 L231.4 136.2 L231.9 136.1 L232.4 135.9 L232.9 135.7 L233.4 135.5 L233.9 135.1 L234.4 134.6 L234.9 134.1 L235.4 133.5 L235.9 132.7 L236.4 132.0 L236.9 131.2 L237.4 130.5 L237.9 129.9 L238.4 129.4 L238.9 129.0 L239.4 128.9 L239.9 128.9 L240.4 129.0 L240.9 129.1 L241.4 129.3 L241.9 129.5 L242.4 129.7 L242.9 130.0 L243.4 130.3 L243.9 130.7 L244.4 131.0 L244.9 131.4 L245.4 131.8 L245.9 132.2 L246.4 132.5 L246.9 132.9 L247.4 133.2 L247.9 133.6 L248.4 133.9 L248.9 134.2 L249.4 134.5 L249.9 134.7 L250.4 135.0 L250.9 135.2 L251.4 135.4 L251.9 135.5 L252.4 135.7 L252.9 135.8 L253.4 135.9 L253.9 136.0 L254.4 136.1 L254.9 136.1 L255.4 136.2 L255.9 136.2 L256.4 136.3 L256.9 136.3 L257.4 136.3 L258.4 136.3 L259.4 136.4 L261.4 136.4 L401.4 136.4 L402.4 136.3 L402.9 136.3 L403.4 136.3 L403.9 136.2 L404.4 136.2 L404.9 136.2 L405.4 136.1 L405.9 136.0 L406.4 135.9 L406.9 135.9 L407.4 135.8 L407.9 135.7 L408.4 135.6 L408.9 135.5 L409.4 135.4 L409.9 135.4 L410.4 135.3 L410.9 135.2 L411.4 135.2 L412.4 135.2 L412.9 135.2 L413.4 135.3 L413.9 135.3 L414.4 135.4 L414.9 135.5 L415.4 135.6 L415.9 135.7 L416.4 135.7 L416.9 135.8 L417.4 135.9 L417.9 136.0 L418.4 136.1 L418.9 136.1 L419.4 136.2 L419.9 136.2 L420.4 136.3 L420.9 136.3 L421.4 136.3 L422.4 136.4 L423.4 136.4 L427.9 136.4 L502.9 136.4 L504.4 136.4 L505.4 136.3 L506.4 136.3 L506.9 136.3 L507.4 136.2 L507.9 136.2 L508.4 136.2 L508.9 136.1 L509.4 136.1 L509.9 136.0 L510.4 135.9 L510.9 135.8 L511.4 135.7 L511.9 135.6 L512.4 135.4 L512.9 135.3 L513.4 135.1 L513.9 134.9 L514.4 134.6 L514.9 134.3 L515.4 134.0 L515.9 133.6 L516.4 133.2 L516.9 132.7 L517.4 132.2 L517.9 131.6 L518.4 131.0 L518.9 130.3 L519.4 129.5 L519.9 128.7 L520.4 127.8 L520.9 126.8 L521.4 125.7 L521.9 124.6 L522.4 123.3 L522.9 122.0 L523.4 120.7 L523.9 119.2 L524.4 117.7 L524.9 116.1 L525.4 114.5 L525.9 112.8 L526.4 111.0 L526.9 109.2 L527.4 107.4 L527.9 105.6 L528.4 103.8 L528.9 101.9 L529.4 100.1 L529.9 98.4 L530.4 96.6 L530.9 95.0 L531.4 93.4 L531.9 91.9 L532.4 90.5 L532.9 89.2 L533.4 88.1 L533.9 87.1 L534.4 86.2 L534.9 85.5 L535.4 85.0 L535.9 84.6 L536.4 84.4 L536.9 84.4 L537.4 84.5 L537.9 84.8 L538.4 85.2 L538.9 85.7 L539.4 86.4 L539.9 87.2 L540.4 88.1 L540.9 89.1 L541.4 90.3 L541.9 91.5 L542.4 92.8 L542.9 94.2 L543.4 95.6 L543.9 97.1 L544.4 98.7 L544.9 100.3 L545.4 101.9 L545.9 103.5 L546.4 105.2 L546.9 106.8 L547.4 108.5 L547.9 110.1 L548.4 111.7 L548.9 113.2 L549.4 114.7 L549.9 116.2 L550.4 117.6 L550.9 119.0 L551.4 120.3 L551.9 121.6 L552.4 122.7 L552.9 123.9 L553.4 124.9 L553.9 126.0 L554.4 126.9 L554.9 127.8 L555.4 128.6 L555.9 129.4 L556.4 130.1 L556.9 130.7 L557.4 131.3 L557.9 131.9 L558.4 132.4 L558.9 132.8 L559.4 133.2 L559.9 133.6 L560.4 133.9 L560.9 134.2 L561.4 134.5 L561.9 134.7 L562.4 135.0 L562.9 135.1 L563.4 135.3 L563.9 135.5 L564.4 135.6 L564.9 135.7 L565.4 135.8 L565.9 135.9 L566.4 136.0 L566.9 136.0 L567.4 136.1 L567.9 136.1 L568.4 136.2 L568.9 136.2 L569.4 136.2 L569.9 136.3 L570.4 136.3 L571.4 136.3 L572.4 136.3 L573.9 136.4 L576.9 136.4 L951.4 136.4 L951.9 136.4 L952.4 136.3 L952.9 136.2 L953.4 136.1 L953.9 135.8 L954.4 135.4 L954.9 134.8 L955.4 133.9 L955.9 132.7 L956.4 131.1 L956.9 129.3 L957.4 127.4 L957.9 125.5 L958.4 123.9 L958.9 122.7 L959.4 122.2 L959.9 123.2 L960.4 124.3 L960.9 125.4 L961.4 126.3 L961.9 127.2 L962.4 128.0 L962.9 128.7 L963.4 129.4 L963.9 130.0 L964.4 130.6 L964.9 131.1 L965.4 131.5 L965.9 132.0 L966.4 132.4 L966.9 132.7 L967.4 133.0 L967.9 133.3 L968.4 133.6 L968.9 133.8 L969.4 134.1 L969.9 134.3 L970.4 134.4 L970.9 134.6 L971.4 134.8 L971.9 134.9 L972.4 135.0 L972.9 135.2 L973.4 135.3 L973.9 135.4 L974.4 135.5 L974.9 135.5 L975.4 135.6 L975.9 135.7 L976.4 135.7 L976.9 135.8 L977.4 135.9 L977.9 135.9 L978.4 135.9 L978.9 136.0 L979.4 136.0 L979.9 136.1 L980.4 136.1 L980.9 136.1 L981.4 136.1 L981.9 136.2 L982.4 136.2 L983.4 136.2 L984.4 136.2 L985.4 136.3 L986.4 136.3 L987.9 136.3 L989.9 136.3 L992.4 136.4 L996.9 136.4 L1046.9 136.4" fill="none" stroke="#1c1ce0" stroke-width=".9"/>
<path d="M41.4 136.4 L119.4 136.4 L119.9 136.3 L120.4 136.3 L120.9 136.2 L121.4 136.1 L121.9 135.9 L122.4 135.6 L122.9 135.1 L123.4 134.5 L123.9 133.7 L124.4 132.7 L124.9 131.6 L125.4 130.2 L125.9 128.8 L126.4 127.5 L126.9 126.2 L127.4 125.3 L127.9 124.6 L128.4 124.4 L128.9 125.2 L129.4 125.9 L129.9 126.6 L130.4 127.2 L130.9 127.8 L131.4 128.4 L131.9 128.9 L132.4 129.4 L132.9 129.8 L133.4 130.2 L133.9 130.6 L134.4 131.0 L134.9 131.4 L135.4 131.7 L135.9 132.0 L136.4 132.3 L136.9 132.5 L137.4 132.8 L137.9 133.0 L138.4 133.2 L138.9 133.4 L139.4 133.6 L139.9 133.8 L140.4 134.0 L140.9 134.1 L141.4 134.3 L141.9 134.4 L142.4 134.5 L142.9 134.7 L143.4 134.8 L143.9 134.9 L144.4 135.0 L144.9 135.1 L145.4 135.2 L145.9 135.2 L146.4 135.3 L146.9 135.4 L147.4 135.4 L147.9 135.5 L148.4 135.6 L148.9 135.6 L149.4 135.7 L149.9 135.7 L150.4 135.8 L150.9 135.8 L151.4 135.8 L151.9 135.9 L152.4 135.9 L152.9 135.9 L153.4 136.0 L153.9 136.0 L154.4 136.0 L154.9 136.0 L155.4 136.1 L155.9 136.1 L156.9 136.1 L157.9 136.2 L158.9 136.2 L159.9 136.2 L160.9 136.2 L162.4 136.3 L163.9 136.3 L165.9 136.3 L168.4 136.3 L171.9 136.4 L177.9 136.4 L228.9 136.4 L229.4 136.3 L229.9 136.3 L230.4 136.2 L230.9 136.1 L231.4 136.0 L231.9 135.7 L232.4 135.3 L232.9 134.7 L233.4 133.8 L233.9 132.6 L234.4 131.1 L234.9 129.0 L235.4 126.3 L235.9 123.0 L236.4 119.1 L236.9 114.6 L237.4 109.6 L237.9 104.2 L238.4 98.7 L238.9 93.3 L239.4 88.3 L239.9 84.0 L240.4 80.7 L240.9 78.6 L241.4 77.9 L241.9 78.2 L242.4 78.9 L242.9 80.1 L243.4 81.8 L243.9 83.8 L244.4 86.3 L244.9 89.0 L245.4 91.9 L245.9 95.1 L246.4 98.3 L246.9 101.6 L247.4 104.8 L247.9 108.1 L248.4 111.1 L248.9 114.1 L249.4 116.9 L249.9 119.5 L250.4 121.8 L250.9 124.0 L251.4 125.9 L251.9 127.6 L252.4 129.1 L252.9 130.3 L253.4 131.4 L253.9 132.4 L254.4 133.2 L254.9 133.8 L255.4 134.4 L255.9 134.8 L256.4 135.2 L256.9 135.4 L257.4 135.7 L257.9 135.9 L258.4 136.0 L258.9 136.1 L259.4 136.2 L259.9 136.2 L260.4 136.3 L260.9 136.3 L261.4 136.3 L262.4 136.4 L263.9 136.4 L395.9 136.4 L396.9 136.3 L397.4 136.3 L397.9 136.3 L398.4 136.2 L398.9 136.2 L399.4 136.1 L399.9 136.0 L400.4 135.9 L400.9 135.8 L401.4 135.7 L401.9 135.5 L402.4 135.3 L402.9 135.0 L403.4 134.7 L403.9 134.4 L404.4 134.1 L404.9 133.7 L405.4 133.2 L405.9 132.8 L406.4 132.3 L406.9 131.8 L407.4 131.2 L407.9 130.7 L408.4 130.2 L408.9 129.7 L409.4 129.2 L409.9 128.8 L410.4 128.4 L410.9 128.1 L411.4 127.9 L411.9 127.8 L412.4 127.7 L412.9 127.7 L413.4 127.8 L413.9 128.0 L414.4 128.2 L414.9 128.5 L415.4 128.8 L415.9 129.2 L416.4 129.6 L416.9 130.0 L417.4 130.5 L417.9 130.9 L418.4 131.4 L418.9 131.9 L419.4 132.3 L419.9 132.8 L420.4 133.2 L420.9 133.6 L421.4 133.9 L421.9 134.3 L422.4 134.6 L422.9 134.8 L423.4 135.1 L423.9 135.3 L424.4 135.5 L424.9 135.7 L425.4 135.8 L425.9 135.9 L426.4 136.0 L426.9 136.1 L427.4 136.1 L427.9 136.2 L428.4 136.2 L428.9 136.3 L429.4 136.3 L429.9 136.3 L430.9 136.4 L432.4 136.4 L505.4 136.4 L506.9 136.3 L507.9 136.3 L508.4 136.3 L508.9 136.3 L509.4 136.2 L509.9 136.2 L510.4 136.1 L510.9 136.1 L511.4 136.0 L511.9 136.0 L512.4 135.9 L512.9 135.8 L513.4 135.7 L513.9 135.6 L514.4 135.4 L514.9 135.3 L515.4 135.1 L515.9 134.9 L516.4 134.7 L516.9 134.5 L517.4 134.2 L517.9 133.9 L518.4 133.6 L518.9 133.2 L519.4 132.8 L519.9 132.4 L520.4 131.9 L520.9 131.4 L521.4 130.9 L521.9 130.3 L522.4 129.7 L522.9 129.1 L523.4 128.4 L523.9 127.7 L524.4 126.9 L524.9 126.2 L525.4 125.4 L525.9 124.6 L526.4 123.7 L526.9 122.9 L527.4 122.0 L527.9 121.2 L528.4 120.3 L528.9 119.5 L529.4 118.6 L529.9 117.8 L530.4 117.1 L530.9 116.4 L531.4 115.7 L531.9 115.0 L532.4 114.5 L532.9 113.9 L533.4 113.5 L533.9 113.1 L534.4 112.8 L534.9 112.6 L535.4 112.5 L535.9 112.4 L536.4 112.4 L536.9 112.5 L537.4 112.7 L537.9 112.9 L538.4 113.2 L538.9 113.5 L539.4 113.9 L539.9 114.3 L540.4 114.8 L540.9 115.4 L541.4 116.0 L541.9 116.6 L542.4 117.3 L542.9 118.0 L543.4 118.7 L543.9 119.4 L544.4 120.2 L544.9 120.9 L545.4 121.7 L545.9 122.5 L546.4 123.2 L546.9 124.0 L547.4 124.7 L547.9 125.4 L548.4 126.2 L548.9 126.9 L549.4 127.5 L549.9 128.2 L550.4 128.8 L550.9 129.4 L551.4 129.9 L551.9 130.5 L552.4 131.0 L552.9 131.5 L553.4 131.9 L553.9 132.3 L554.4 132.7 L554.9 133.1 L555.4 133.4 L555.9 133.7 L556.4 134.0 L556.9 134.3 L557.4 134.5 L557.9 134.7 L558.4 134.9 L558.9 135.1 L559.4 135.2 L559.9 135.4 L560.4 135.5 L560.9 135.6 L561.4 135.7 L561.9 135.8 L562.4 135.9 L562.9 136.0 L563.4 136.0 L563.9 136.1 L564.4 136.1 L564.9 136.2 L565.4 136.2 L565.9 136.2 L566.4 136.3 L566.9 136.3 L567.9 136.3 L568.9 136.3 L570.4 136.4 L572.9 136.4 L951.9 136.4 L952.4 136.3 L952.9 136.3 L953.4 136.2 L953.9 135.9 L954.4 135.6 L954.9 135.1 L955.4 134.3 L955.9 133.2 L956.4 131.9 L956.9 130.3 L957.4 128.5 L957.9 126.8 L958.4 125.2 L958.9 124.0 L959.4 123.5 L959.9 124.0 L960.4 125.0 L960.9 125.9 L961.4 126.8 L961.9 127.5 L962.4 128.2 L962.9 128.9 L963.4 129.5 L963.9 130.1 L964.4 130.6 L964.9 131.0 L965.4 131.5 L965.9 131.9 L966.4 132.2 L966.9 132.5 L967.4 132.9 L967.9 133.1 L968.4 133.4 L968.9 133.6 L969.4 133.9 L969.9 134.1 L970.4 134.3 L970.9 134.4 L971.4 134.6 L971.9 134.7 L972.4 134.9 L972.9 135.0 L973.4 135.1 L973.9 135.2 L974.4 135.3 L974.9 135.4 L975.4 135.5 L975.9 135.5 L976.4 135.6 L976.9 135.7 L977.4 135.7 L977.9 135.8 L978.4 135.8 L978.9 135.9 L979.4 135.9 L979.9 136.0 L980.4 136.0 L980.9 136.0 L981.4 136.1 L981.9 136.1 L982.4 136.1 L982.9 136.1 L983.4 136.2 L984.4 136.2 L985.4 136.2 L986.4 136.3 L987.4 136.3 L988.9 136.3 L990.4 136.3 L992.4 136.3 L995.4 136.4 L1001.4 136.4 L1046.9 136.4" fill="none" stroke="#151515" stroke-width=".9"/>
<path d="M41.4 136.4 L118.4 136.4 L118.9 136.4 L119.4 136.3 L119.9 136.2 L120.4 136.1 L120.9 135.8 L121.4 135.5 L121.9 134.9 L122.4 134.0 L122.9 132.8 L123.4 131.2 L123.9 129.1 L124.4 126.6 L124.9 123.7 L125.4 120.4 L125.9 117.1 L126.4 114.0 L126.9 111.2 L127.4 109.2 L127.9 108.1 L128.4 108.7 L128.9 110.6 L129.4 112.4 L129.9 114.0 L130.4 115.6 L130.9 117.0 L131.4 118.4 L131.9 119.6 L132.4 120.8 L132.9 121.8 L133.4 122.8 L133.9 123.8 L134.4 124.6 L134.9 125.5 L135.4 126.2 L135.9 126.9 L136.4 127.6 L136.9 128.2 L137.4 128.7 L137.9 129.3 L138.4 129.8 L138.9 130.2 L139.4 130.6 L139.9 131.0 L140.4 131.4 L140.9 131.8 L141.4 132.1 L141.9 132.4 L142.4 132.7 L142.9 132.9 L143.4 133.2 L143.9 133.4 L144.4 133.6 L144.9 133.8 L145.4 134.0 L145.9 134.1 L146.4 134.3 L146.9 134.4 L147.4 134.6 L147.9 134.7 L148.4 134.8 L148.9 134.9 L149.4 135.0 L149.9 135.1 L150.4 135.2 L150.9 135.3 L151.4 135.4 L151.9 135.4 L152.4 135.5 L152.9 135.6 L153.4 135.6 L153.9 135.7 L154.4 135.7 L154.9 135.8 L155.4 135.8 L155.9 135.9 L156.4 135.9 L156.9 135.9 L157.4 136.0 L157.9 136.0 L158.4 136.0 L158.9 136.0 L159.4 136.1 L159.9 136.1 L160.4 136.1 L161.4 136.2 L162.4 136.2 L163.4 136.2 L164.4 136.2 L165.4 136.3 L166.9 136.3 L168.4 136.3 L170.4 136.3 L172.9 136.4 L176.9 136.4 L186.4 136.4 L230.4 136.4 L230.9 136.3 L231.4 136.3 L231.9 136.2 L232.4 136.1 L232.9 135.9 L233.4 135.7 L233.9 135.3 L234.4 134.7 L234.9 134.0 L235.4 133.0 L235.9 131.8 L236.4 130.3 L236.9 128.5 L237.4 126.5 L237.9 124.4 L238.4 122.2 L238.9 120.0 L239.4 118.0 L239.9 116.4 L240.4 115.2 L240.9 114.5 L241.4 114.4 L241.9 114.6 L242.4 115.0 L242.9 115.6 L243.4 116.4 L243.9 117.4 L244.4 118.5 L244.9 119.7 L245.4 120.9 L245.9 122.3 L246.4 123.6 L246.9 124.9 L247.4 126.2 L247.9 127.4 L248.4 128.6 L248.9 129.7 L249.4 130.7 L249.9 131.6 L250.4 132.4 L250.9 133.0 L251.4 133.7 L251.9 134.2 L252.4 134.6 L252.9 135.0 L253.4 135.3 L253.9 135.5 L254.4 135.7 L254.9 135.9 L255.4 136.0 L255.9 136.1 L256.4 136.2 L256.9 136.2 L257.4 136.3 L257.9 136.3 L258.4 136.3 L259.4 136.4 L261.4 136.4 L390.9 136.4 L391.4 136.4 L391.9 136.3 L392.4 136.3 L392.9 136.3 L393.4 136.2 L393.9 136.1 L394.4 136.0 L394.9 135.9 L395.4 135.7 L395.9 135.4 L396.4 135.1 L396.9 134.7 L397.4 134.2 L397.9 133.5 L398.4 132.7 L398.9 131.7 L399.4 130.5 L399.9 129.0 L400.4 127.2 L400.9 125.0 L401.4 122.5 L401.9 119.6 L402.4 116.3 L402.9 112.5 L403.4 108.3 L403.9 103.6 L404.4 98.5 L404.9 93.0 L405.4 87.1 L405.9 80.9 L406.4 74.5 L406.9 68.0 L407.4 61.4 L407.9 54.9 L408.4 48.7 L408.9 42.8 L409.4 37.4 L409.9 32.6 L410.4 28.6 L410.9 25.3 L411.4 23.0 L411.9 21.7 L412.4 21.4 L412.9 21.9 L413.4 23.0 L413.9 24.7 L414.4 27.1 L414.9 30.0 L415.4 33.4 L415.9 37.3 L416.4 41.6 L416.9 46.2 L417.4 51.1 L417.9 56.2 L418.4 61.4 L418.9 66.6 L419.4 71.9 L419.9 77.1 L420.4 82.2 L420.9 87.2 L421.4 91.9 L421.9 96.5 L422.4 100.7 L422.9 104.7 L423.4 108.4 L423.9 111.9 L424.4 115.0 L424.9 117.8 L425.4 120.4 L425.9 122.6 L426.4 124.7 L426.9 126.4 L427.4 128.0 L427.9 129.4 L428.4 130.5 L428.9 131.5 L429.4 132.4 L429.9 133.1 L430.4 133.7 L430.9 134.2 L431.4 134.7 L431.9 135.0 L432.4 135.3 L432.9 135.5 L433.4 135.7 L433.9 135.9 L434.4 136.0 L434.9 136.1 L435.4 136.1 L435.9 136.2 L436.4 136.3 L436.9 136.3 L437.4 136.3 L437.9 136.3 L438.9 136.4 L440.4 136.4 L505.9 136.4 L507.4 136.3 L508.4 136.3 L508.9 136.3 L509.4 136.3 L509.9 136.2 L510.4 136.2 L510.9 136.2 L511.4 136.1 L511.9 136.1 L512.4 136.0 L512.9 135.9 L513.4 135.8 L513.9 135.8 L514.4 135.6 L514.9 135.5 L515.4 135.4 L515.9 135.2 L516.4 135.1 L516.9 134.9 L517.4 134.7 L517.9 134.4 L518.4 134.2 L518.9 133.9 L519.4 133.6 L519.9 133.2 L520.4 132.9 L520.9 132.5 L521.4 132.1 L521.9 131.6 L522.4 131.1 L522.9 130.6 L523.4 130.1 L523.9 129.5 L524.4 128.9 L524.9 128.3 L525.4 127.7 L525.9 127.0 L526.4 126.4 L526.9 125.7 L527.4 125.0 L527.9 124.3 L528.4 123.7 L528.9 123.0 L529.4 122.3 L529.9 121.7 L530.4 121.1 L530.9 120.5 L531.4 120.0 L531.9 119.5 L532.4 119.0 L532.9 118.6 L533.4 118.3 L533.9 118.0 L534.4 117.7 L534.9 117.6 L535.4 117.4 L535.9 117.4 L536.4 117.4 L536.9 117.5 L537.4 117.6 L537.9 117.8 L538.4 118.0 L538.9 118.3 L539.4 118.6 L539.9 118.9 L540.4 119.3 L540.9 119.8 L541.4 120.2 L541.9 120.7 L542.4 121.3 L542.9 121.8 L543.4 122.4 L543.9 123.0 L544.4 123.5 L544.9 124.1 L545.4 124.8 L545.9 125.4 L546.4 126.0 L546.9 126.6 L547.4 127.2 L547.9 127.7 L548.4 128.3 L548.9 128.8 L549.4 129.4 L549.9 129.9 L550.4 130.4 L550.9 130.8 L551.4 131.3 L551.9 131.7 L552.4 132.1 L552.9 132.5 L553.4 132.8 L553.9 133.2 L554.4 133.5 L554.9 133.8 L555.4 134.0 L555.9 134.3 L556.4 134.5 L556.9 134.7 L557.4 134.9 L557.9 135.1 L558.4 135.2 L558.9 135.4 L559.4 135.5 L559.9 135.6 L560.4 135.7 L560.9 135.8 L561.4 135.9 L561.9 135.9 L562.4 136.0 L562.9 136.1 L563.4 136.1 L563.9 136.1 L564.4 136.2 L564.9 136.2 L565.4 136.2 L565.9 136.3 L566.4 136.3 L567.4 136.3 L568.4 136.3 L569.9 136.4 L572.4 136.4 L950.9 136.4 L951.4 136.4 L951.9 136.3 L952.4 136.2 L952.9 136.0 L953.4 135.6 L953.9 134.9 L954.4 133.8 L954.9 132.1 L955.4 129.8 L955.9 126.6 L956.4 122.7 L956.9 118.2 L957.4 113.4 L957.9 108.9 L958.4 105.1 L958.9 102.6 L959.4 101.7 L959.9 104.8 L960.4 107.7 L960.9 110.3 L961.4 112.6 L961.9 114.7 L962.4 116.7 L962.9 118.5 L963.4 120.1 L963.9 121.6 L964.4 122.9 L964.9 124.1 L965.4 125.2 L965.9 126.2 L966.4 127.1 L966.9 128.0 L967.4 128.7 L967.9 129.4 L968.4 130.0 L968.9 130.6 L969.4 131.1 L969.9 131.6 L970.4 132.0 L970.9 132.4 L971.4 132.8 L971.9 133.1 L972.4 133.4 L972.9 133.7 L973.4 133.9 L973.9 134.2 L974.4 134.4 L974.9 134.5 L975.4 134.7 L975.9 134.9 L976.4 135.0 L976.9 135.1 L977.4 135.2 L977.9 135.3 L978.4 135.4 L978.9 135.5 L979.4 135.6 L979.9 135.7 L980.4 135.7 L980.9 135.8 L981.4 135.9 L981.9 135.9 L982.4 135.9 L982.9 136.0 L983.4 136.0 L983.9 136.1 L984.4 136.1 L984.9 136.1 L985.4 136.1 L985.9 136.2 L986.4 136.2 L987.4 136.2 L988.4 136.3 L989.4 136.3 L990.4 136.3 L991.9 136.3 L993.9 136.3 L996.9 136.4 L1003.4 136.4 L1046.9 136.4" fill="none" stroke="#e61c1c" stroke-width=".9"/>
<path d="M41.4 136.4 L505.4 136.4 L507.4 136.4 L508.4 136.3 L509.4 136.3 L510.4 136.3 L510.9 136.2 L511.4 136.2 L511.9 136.2 L512.4 136.2 L512.9 136.1 L513.4 136.1 L513.9 136.0 L514.4 136.0 L514.9 135.9 L515.4 135.8 L515.9 135.8 L516.4 135.7 L516.9 135.6 L517.4 135.5 L517.9 135.4 L518.4 135.3 L518.9 135.1 L519.4 135.0 L519.9 134.9 L520.4 134.7 L520.9 134.5 L521.4 134.4 L521.9 134.2 L522.4 134.0 L522.9 133.8 L523.4 133.5 L523.9 133.3 L524.4 133.1 L524.9 132.8 L525.4 132.6 L525.9 132.4 L526.4 132.1 L526.9 131.8 L527.4 131.6 L527.9 131.3 L528.4 131.1 L528.9 130.8 L529.4 130.6 L529.9 130.4 L530.4 130.1 L530.9 129.9 L531.4 129.7 L531.9 129.5 L532.4 129.4 L532.9 129.2 L533.4 129.1 L533.9 129.0 L534.4 128.9 L534.9 128.9 L535.4 128.8 L536.4 128.8 L536.9 128.8 L537.4 128.9 L537.9 128.9 L538.4 129.0 L538.9 129.1 L539.4 129.2 L539.9 129.4 L540.4 129.5 L540.9 129.7 L541.4 129.8 L541.9 130.0 L542.4 130.2 L542.9 130.4 L543.4 130.6 L543.9 130.8 L544.4 131.1 L544.9 131.3 L545.4 131.5 L545.9 131.7 L546.4 132.0 L546.9 132.2 L547.4 132.4 L547.9 132.7 L548.4 132.9 L548.9 133.1 L549.4 133.3 L549.9 133.5 L550.4 133.7 L550.9 133.9 L551.4 134.1 L551.9 134.3 L552.4 134.4 L552.9 134.6 L553.4 134.7 L553.9 134.9 L554.4 135.0 L554.9 135.1 L555.4 135.2 L555.9 135.4 L556.4 135.5 L556.9 135.5 L557.4 135.6 L557.9 135.7 L558.4 135.8 L558.9 135.8 L559.4 135.9 L559.9 136.0 L560.4 136.0 L560.9 136.1 L561.4 136.1 L561.9 136.1 L562.4 136.2 L562.9 136.2 L563.4 136.2 L563.9 136.2 L564.4 136.3 L565.4 136.3 L566.4 136.3 L567.9 136.4 L569.9 136.4 L574.9 136.4 L1046.4 136.4" fill="none" stroke="#22e022" stroke-width="1.300"/>
<path d="M102.5 136.5H119.4M162.6 136.5H214.0M218.0 136.5H231.0M268.6 136.5H396.0M438.0 136.5H469.0M494.5 136.5H516.0M565.0 136.5H875.0M934.0 136.5H952.0M993.0 136.5H1046.5" fill="none" stroke="#128412" stroke-width="2.100"/>
<path d="M41.3 148.0V18.7H1176.0" fill="none" stroke="#1a1a1a" stroke-width="1.600"/>
<path d="M1175.8 19.5V147.7H42.0" fill="none" stroke="#f4f4f4" stroke-width="1"/>
<path d="M37.0 19.4V147.8" stroke="#222" stroke-width="1.200"/>
<path d="M30.0 19.4H37.0M30.0 31.7H37.0M34.0 44.8H37.0M34.0 57.9H37.0M34.0 70.9H37.0M30.0 84.0H37.0M34.0 97.1H37.0M34.0 110.2H37.0M34.0 123.3H37.0M34.0 136.3H37.0M30.0 147.6H37.0" stroke="#222" stroke-width="1" fill="none"/>
<text x="28.5" y="24.0" text-anchor="end">447</text>
<text x="28.5" y="88.6" text-anchor="end">200</text>
<text x="28.5" y="152.2" text-anchor="end">-43</text>
<path d="M41.0 152.4H1176.0" stroke="#222" stroke-width="1.200"/>
<path d="M41.4 152.4v6.6M57.6 152.4v2.2M73.8 152.4v2.2M90.0 152.4v2.2M106.2 152.4v2.2M122.4 152.4v6.6M138.6 152.4v2.2M154.8 152.4v2.2M171.0 152.4v2.2M187.2 152.4v2.2M203.4 152.4v6.6M219.6 152.4v2.2M235.8 152.4v2.2M252.0 152.4v2.2M268.2 152.4v2.2M284.4 152.4v6.6M300.6 152.4v2.2M316.8 152.4v2.2M333.0 152.4v2.2M349.2 152.4v2.2M365.4 152.4v6.6M381.6 152.4v2.2M397.8 152.4v2.2M414.0 152.4v2.2M430.2 152.4v2.2M446.4 152.4v6.6M462.6 152.4v2.2M478.8 152.4v2.2M495.0 152.4v2.2M511.2 152.4v2.2M527.4 152.4v6.6M543.6 152.4v2.2M559.8 152.4v2.2M576.0 152.4v2.2M592.2 152.4v2.2M608.4 152.4v6.6M624.6 152.4v2.2M640.8 152.4v2.2M657.0 152.4v2.2M673.2 152.4v2.2M689.4 152.4v6.6M705.6 152.4v2.2M721.8 152.4v2.2M738.0 152.4v2.2M754.2 152.4v2.2M770.4 152.4v6.6M786.6 152.4v2.2M802.8 152.4v2.2M819.0 152.4v2.2M835.2 152.4v2.2M851.4 152.4v6.6M867.6 152.4v2.2M883.8 152.4v2.2M900.0 152.4v2.2M916.2 152.4v2.2M932.4 152.4v6.6M948.6 152.4v2.2M964.8 152.4v2.2M981.0 152.4v2.2M997.2 152.4v2.2M1013.4 152.4v6.6M1029.6 152.4v2.2M1045.8 152.4v2.2M1062.0 152.4v2.2M1078.2 152.4v2.2M1094.4 152.4v6.6M1110.6 152.4v2.2M1126.8 152.4v2.2M1143.0 152.4v2.2M1159.2 152.4v2.2M1175.4 152.4v6.6" stroke="#222" stroke-width="1" fill="none"/>
<text x="41.4" y="171.6" text-anchor="middle">0.00</text>
<text x="122.4" y="171.6" text-anchor="middle">0.50</text>
<text x="203.4" y="171.6" text-anchor="middle">1.00</text>
<text x="284.4" y="171.6" text-anchor="middle">1.50</text>
<text x="365.4" y="171.6" text-anchor="middle">2.00</text>
<text x="446.4" y="171.6" text-anchor="middle">2.50</text>
<text x="527.4" y="171.6" text-anchor="middle">3.00</text>
<text x="608.4" y="171.6" text-anchor="middle">3.50</text>
<text x="689.4" y="171.6" text-anchor="middle">4.00</text>
<text x="770.4" y="171.6" text-anchor="middle">4.50</text>
<text x="851.4" y="171.6" text-anchor="middle">5.00</text>
<text x="932.4" y="171.6" text-anchor="middle">5.50</text>
<text x="1013.4" y="171.6" text-anchor="middle">6.00</text>
<text x="1094.4" y="171.6" text-anchor="middle">6.50</text>
<text x="1175.4" y="171.6" text-anchor="middle">7.00</text>
<text x="41.6" y="15.0">manual #1</text>
<text x="608.5" y="15.0" text-anchor="middle">Manual Acquisition</text>
<text x="1175.5" y="15.0" text-anchor="end" font-size="12.900">1000.0 µl from Pos. 1</text>
<text x="44.4" y="33.6">mAU</text>
<text x="44.4" y="49.6">-1.70435</text>
<text x="1172.5" y="35.0" text-anchor="end" fill="#141414" font-size="13.300">CD_1_Total</text>
<text x="1172.5" y="51.6" text-anchor="end" fill="#141414" font-size="13.300">CD_1</text>
<text x="1172.5" y="68.1" text-anchor="end" fill="#141414" font-size="13.300">Pump_1_Pressure</text>
<text x="1172.5" y="84.7" text-anchor="end" fill="#141414" font-size="13.300">Pump_2_Pressure</text>
<text x="1172.5" y="101.2" text-anchor="end" fill="#141414" font-size="13.300">Lamphouse_Temp</text>
<text x="1172.5" y="117.8" text-anchor="end" fill="#e428e4" font-size="13.300">Ambient_Temp</text>
<text x="1172.5" y="134.3" text-anchor="end" fill="#22e022" font-size="13.300">UV_VIS_4</text>
<rect x="1113.0" y="133.2" width="60.500" height="12" fill="#fff"/>
<text x="1172.5" y="142.2" text-anchor="end">6.215 min</text>
</svg>
<!-- ================= BUTTON GROUPS ================= -->
<div class="gb" style="left:14px;top:291px;width:172px;height:110px"></div>
<span class="gbt" style="left:15px;top:282px">1. Create Application</span>
<div class="btn" style="left:20px;top:302.5px;width:158.5px;height:25.500px;line-height:24px">Create Program</div>
<div class="btn" style="left:20px;top:336px;width:158.5px;height:25.500px;line-height:24px">Create Sequence</div>
<div class="btn" style="left:20px;top:369.5px;width:158.5px;height:25.500px;line-height:24px">Edit Program</div>
<div class="gb" style="left:193px;top:291px;width:173px;height:110px"></div>
<span class="gbt" style="left:194px;top:282px">2. Prepare System</span>
<div class="btn" style="left:200px;top:302.5px;width:158.5px;height:25.500px;line-height:24px">Application Wizard</div>
<div class="btn" style="left:200px;top:336px;width:71.5px;height:25.500px;line-height:24px">Acq On</div>
<div class="btn" style="left:279.5px;top:336px;width:79.0px;height:25.500px;line-height:24px">Acq Off</div>
<div class="btn" style="left:200px;top:369.5px;width:158.5px;height:25.500px;line-height:24px">Load Sequence</div>
<div class="gb" style="left:374px;top:291px;width:178px;height:110px"></div>
<span class="gbt" style="left:375px;top:282px">3. Execute Application</span>
<div class="btn" style="left:380px;top:302.5px;width:78.5px;height:25.500px;line-height:24px">Hold</div>
<div class="btn" style="left:466px;top:302.5px;width:79px;height:25.500px;line-height:24px">Continue</div>
<div class="btn" style="left:380px;top:336px;width:165px;height:25.500px;line-height:24px">Start Batch</div>
<div class="btn" style="left:380px;top:369.5px;width:165px;height:25.500px;line-height:24px">Abort Batch</div>
<div class="gb" style="left:561px;top:291px;width:152px;height:110px"></div>
<span class="gbt" style="left:562px;top:282px">System Maintenance</span>
<div class="btn" style="left:566px;top:302.5px;width:139px;height:25.500px;line-height:24px">Daily Audit Trail</div>
<div class="btn" style="left:566px;top:336px;width:139px;height:25.500px;line-height:24px">Consumable Change</div>
<div class="btn" style="left:566px;top:369.5px;width:139px;height:25.500px;line-height:24px">Eluent Change</div>
<!-- ================= SEQUENCE GROUP ================= -->
<div class="gb" style="left:14px;top:417px;width:1570px;height:419px"></div>
<span class="gbt" style="left:15.500px;top:409.500px">Sequence</span>
<div id="grid" style="left:20px;top:430px;width:1558px;height:400.500px;background:#fff;border:1px solid #585858"></div>
<!-- ================= SEQUENCE TABLE ================= -->
<div id="tbl" style="left:21px;top:431px;width:722px;height:398px;overflow:hidden">
<div style="left:0;top:0;width:721px;height:14.6px;background:#f0f0f0"></div>
<div style="left:0;top:14.6px;width:20.25px;height:400px;background:#f0f0f0"></div>
<div class="hl" style="top:27.73px"></div>
<div class="hd" style="top:26.73px"></div>
<div class="hl" style="top:41.07px"></div>
<div class="hd" style="top:40.07px"></div>
<div class="hl" style="top:54.40px"></div>
<div class="hd" style="top:53.40px"></div>
<div class="hl" style="top:67.73px"></div>
<div class="hd" style="top:66.73px"></div>
<div class="hl" style="top:81.07px"></div>
<div class="hd" style="top:80.07px"></div>
<div class="hl" style="top:94.40px"></div>
<div class="hd" style="top:93.40px"></div>
<div class="hl" style="top:107.73px"></div>
<div class="hd" style="top:106.73px"></div>
<div class="hl" style="top:121.07px"></div>
<div class="hd" style="top:120.07px"></div>
<div class="hl" style="top:134.40px"></div>
<div class="hd" style="top:133.40px"></div>
<div class="hl" style="top:147.73px"></div>
<div class="hd" style="top:146.73px"></div>
<div class="hl" style="top:161.07px"></div>
<div class="hd" style="top:160.07px"></div>
<div class="hl" style="top:174.40px"></div>
<div class="hd" style="top:173.40px"></div>
<div class="hl" style="top:187.73px"></div>
<div class="hd" style="top:186.73px"></div>
<div class="hl" style="top:201.07px"></div>
<div class="hd" style="top:200.07px"></div>
<div class="hl" style="top:214.40px"></div>
<div class="hd" style="top:213.40px"></div>
<div class="hl" style="top:227.73px"></div>
<div class="hd" style="top:226.73px"></div>
<div class="hl" style="top:241.07px"></div>
<div class="hd" style="top:240.07px"></div>
<div class="hl" style="top:254.40px"></div>
<div class="hd" style="top:253.40px"></div>
<div class="hl" style="top:267.73px"></div>
<div class="hd" style="top:266.73px"></div>
<div class="hl" style="top:281.07px"></div>
<div class="hd" style="top:280.07px"></div>
<div class="hl" style="top:294.40px"></div>
<div class="hd" style="top:293.40px"></div>
<div class="hl" style="top:307.73px"></div>
<div class="hd" style="top:306.73px"></div>
<div class="hl" style="top:321.07px"></div>
<div class="hd" style="top:320.07px"></div>
<div class="hl" style="top:334.40px"></div>
<div class="hd" style="top:333.40px"></div>
<div class="hl" style="top:347.73px"></div>
<div class="hd" style="top:346.73px"></div>
<div class="hl" style="top:361.07px"></div>
<div class="hd" style="top:360.07px"></div>
<div class="hl" style="top:374.40px"></div>
<div class="hd" style="top:373.40px"></div>
<div class="hl" style="top:387.73px"></div>
<div class="hd" style="top:386.73px"></div>
<div class="hl" style="top:401.07px"></div>
<div class="hd" style="top:400.07px"></div>
<div class="vl" style="left:40.50px"></div>
<div class="vl" style="left:82.25px"></div>
<div class="vl" style="left:149.25px"></div>
<div class="vl" style="left:203.00px"></div>
<div class="vl" style="left:286.50px"></div>
<div class="vl" style="left:386.50px"></div>
<div class="vl" style="left:444.75px"></div>
<div class="vl" style="left:511.50px"></div>
<div class="vl" style="left:720.50px"></div>
<div class="vh" style="left:19.95px"></div>
<div class="vh" style="left:40.70px"></div>
<div class="vh" style="left:82.45px"></div>
<div class="vh" style="left:149.45px"></div>
<div class="vh" style="left:203.20px"></div>
<div class="vh" style="left:286.70px"></div>
<div class="vh" style="left:386.70px"></div>
<div class="vh" style="left:444.95px"></div>
<div class="vh" style="left:511.70px"></div>
<div class="vh" style="left:720.70px"></div>
<div class="vd" style="left:20.15px"></div>
<div style="left:0;top:13.90px;width:721.6px;height:1.300px;background:#1c1c1c"></div>
<span class="th" style="left:8.6px">N</span>
<span class="th" style="left:25.8px">Po</span>
<span class="th" style="left:46.2px">Inj. Vol</span>
<span class="th" style="left:88.4px">Program</span>
<span class="th" style="left:154.8px">Status</span>
<span class="th" style="left:208.8px">Inj. Date/Time</span>
<span class="th" style="left:292px">Name</span>
<span class="th" style="left:392px">Type</span>
<span class="th" style="left:450.6px">Method</span>
<span class="th" style="left:517.4px">Sequence</span>
<div class="tr" style="top:15.20px"><span class="rn">1</span><span style="left:25.4px">1</span><span style="left:45.4px">25.0</span><span style="left:87.6px">Sophia ex</span><span style="left:154.2px">Finishe</span><span style="left:208.2px">2/4/2010 1:52:5</span><span style="left:291.4px">DI water</span><span style="left:391.4px">Unknow</span><span style="left:449.8px">ORGANIC</span><span style="left:516.6px">ICS-3000<i>_</i>IC\SOPHIA SEQUENCE2</span></div>
<div class="tr" style="top:28.53px"><span class="rn">2</span><span style="left:25.4px">2</span><span style="left:45.4px">25.0</span><span style="left:87.6px">Sophia ex</span><span style="left:154.2px">Finishe</span><span style="left:208.2px">5/24/2018 2:21:</span><span style="left:291.4px">STANDARD1</span><span style="left:391.4px">Standar</span><span style="left:449.8px">ORGANIC</span><span style="left:516.6px">ICS-3000<i>_</i>IC\SOPHIA SEQUENCE2</span></div>
<div class="tr" style="top:41.87px"><span class="rn">3</span><span style="left:25.4px">3</span><span style="left:45.4px">25.0</span><span style="left:87.6px">Sophia ex</span><span style="left:154.2px">Finishe</span><span style="left:208.2px">5/24/2018 2:48:</span><span style="left:291.4px">STANDARD2</span><span style="left:391.4px">Standar</span><span style="left:449.8px">ORGANIC</span><span style="left:516.6px">ICS-3000<i>_</i>IC\SOPHIA SEQUENCE2</span></div>
<div class="tr" style="top:55.20px"><span class="rn">4</span><span style="left:25.4px">4</span><span style="left:45.4px">25.0</span><span style="left:87.6px">Sophia ex</span><span style="left:154.2px">Finishe</span><span style="left:208.2px">5/24/2018 3:15:</span><span style="left:291.4px">STANDARD3</span><span style="left:391.4px">Standar</span><span style="left:449.8px">ORGANIC</span><span style="left:516.6px">ICS-3000<i>_</i>IC\SOPHIA SEQUENCE2</span></div>
<div class="tr" style="top:68.53px"><span class="rn">5</span><span style="left:25.4px">5</span><span style="left:45.4px">25.0</span><span style="left:87.6px">Sophia ex</span><span style="left:154.2px">Finishe</span><span style="left:208.2px">6/27/2013 11:12</span><span style="left:291.4px">malic 25</span><span style="left:391.4px">Standar</span><span style="left:449.8px">ORGANIC</span><span style="left:516.6px">ICS-3000<i>_</i>IC\SOPHIA SEQUENCE2</span></div>
<div class="tr" style="top:81.87px"><span class="rn">6</span><span style="left:25.4px">6</span><span style="left:45.4px">25.0</span><span style="left:87.6px">Sophia ex</span><span style="left:154.2px">Finishe</span><span style="left:208.2px">6/27/2013 11:39</span><span style="left:291.4px">malic 50</span><span style="left:391.4px">Standar</span><span style="left:449.8px">ORGANIC</span><span style="left:516.6px">ICS-3000<i>_</i>IC\SOPHIA SEQUENCE2</span></div>
<div class="tr" style="top:95.20px"><span class="rn">7</span><span style="left:25.4px">7</span><span style="left:45.4px">25.0</span><span style="left:87.6px">Sophia ex</span><span style="left:154.2px">Finishe</span><span style="left:208.2px">6/27/2013 12:06</span><span style="left:291.4px">malic 100</span><span style="left:391.4px">Standar</span><span style="left:449.8px">ORGANIC</span><span style="left:516.6px">ICS-3000<i>_</i>IC\SOPHIA SEQUENCE2</span></div>
<div class="tr" style="top:108.53px"><span class="rn">8</span><span style="left:25.4px">8</span><span style="left:45.4px">25.0</span><span style="left:87.6px">Sophia ex</span><span style="left:154.2px">Finishe</span><span style="left:208.2px">5/11/2018 10:56</span><span style="left:291.4px">Cl 1</span><span style="left:391.4px">Standar</span><span style="left:449.8px">ORGANIC</span><span style="left:516.6px">ICS-3000<i>_</i>IC\SOPHIA SEQUENCE2</span></div>
<div class="tr" style="top:121.87px"><span class="rn">9</span><span style="left:25.4px">9</span><span style="left:45.4px">25.0</span><span style="left:87.6px">Sophia ex</span><span style="left:154.2px">Finishe</span><span style="left:208.2px">5/11/2018 11:23</span><span style="left:291.4px">Cl 2</span><span style="left:391.4px">Standar</span><span style="left:449.8px">ORGANIC</span><span style="left:516.6px">ICS-3000<i>_</i>IC\SOPHIA SEQUENCE2</span></div>
<div class="tr" style="top:135.20px"><span class="rn">10</span><span style="left:25.4px">10</span><span style="left:45.4px">25.0</span><span style="left:87.6px">Sophia ex</span><span style="left:154.2px">Finishe</span><span style="left:208.2px">5/11/2018 11:50</span><span style="left:291.4px">Cl3</span><span style="left:391.4px">Standar</span><span style="left:449.8px">ORGANIC</span><span style="left:516.6px">ICS-3000<i>_</i>IC\SOPHIA SEQUENCE2</span></div>
<div class="tr" style="top:148.53px"><span class="rn">11</span><span style="left:25.4px">11</span><span style="left:45.4px">25.0</span><span style="left:87.6px">Sophia ex</span><span style="left:154.2px">Finishe</span><span style="left:208.2px">7/12/2022 1:57:</span><span style="left:291.4px">di water</span><span style="left:391.4px">Unknow</span><span style="left:449.8px">ORGANIC</span><span style="left:516.6px">ICS-3000<i>_</i>IC\SOPHIA SEQUENCE2</span></div>
<div class="tr" style="top:161.87px"><span class="rn">12</span><span style="left:25.4px">11</span><span style="left:45.4px">25.0</span><span style="left:87.6px">Sophia ex</span><span style="left:154.2px">Finishe</span><span style="left:208.2px">4/10/2018 2:06:</span><span style="left:291.4px">Di water</span><span style="left:391.4px">Unknow</span><span style="left:449.8px">ORGANIC</span><span style="left:516.6px">ICS-3000<i>_</i>IC\SOPHIA SEQUENCE2</span></div>
<div class="tr" style="top:175.20px"><span class="rn">13</span><span style="left:25.4px">13</span><span style="left:45.4px">25.0</span><span style="left:87.6px">Sophia ex</span><span style="left:154.2px">Finishe</span><span style="left:208.2px">2/26/2019 9:35:</span><span style="left:291.4px">NaF 25 ppm</span><span style="left:391.4px">Standar</span><span style="left:449.8px">ORGANIC</span><span style="left:516.6px">ICS-3000<i>_</i>IC\SOPHIA SEQUENCE2</span></div>
<div class="tr" style="top:188.53px"><span class="rn">14</span><span style="left:25.4px">14</span><span style="left:45.4px">25.0</span><span style="left:87.6px">Sophia ex</span><span style="left:154.2px">Finishe</span><span style="left:208.2px">2/26/2019 10:01</span><span style="left:291.4px">NaF 50 ppm</span><span style="left:391.4px">Standar</span><span style="left:449.8px">ORGANIC</span><span style="left:516.6px">ICS-3000<i>_</i>IC\SOPHIA SEQUENCE2</span></div>
<div class="tr" style="top:201.87px"><span class="rn">15</span><span style="left:25.4px">15</span><span style="left:45.4px">25.0</span><span style="left:87.6px">Sophia ex</span><span style="left:154.2px">Finishe</span><span style="left:208.2px">2/26/2019 10:28</span><span style="left:291.4px">NaF 100 ppm</span><span style="left:391.4px">Standar</span><span style="left:449.8px">ORGANIC</span><span style="left:516.6px">ICS-3000<i>_</i>IC\SOPHIA SEQUENCE2</span></div>
<div class="tr" style="top:215.20px"><span class="rn">16</span><span style="left:25.4px">16</span><span style="left:45.4px">25.0</span><span style="left:87.6px">Sophia ex</span><span style="left:154.2px">Finishe</span><span style="left:208.2px">5/2/2022 1:52:4</span><span style="left:291.4px">standard</span><span style="left:391.4px">Unknow</span><span style="left:449.8px">ORGANIC</span><span style="left:516.6px">ICS-3000<i>_</i>IC\SOPHIA SEQUENCE2</span></div>
<div class="tr" style="top:228.53px"><span class="rn">17</span><span style="left:25.4px">17</span><span style="left:45.4px">25.0</span><span style="left:87.6px">Sophia ex</span><span style="left:154.2px">Finishe</span><span style="left:208.2px">5/2/2022 2:19:3</span><span style="left:291.4px">DB220073</span><span style="left:391.4px">Unknow</span><span style="left:449.8px">ORGANIC</span><span style="left:516.6px">ICS-3000<i>_</i>IC\SOPHIA SEQUENCE2</span></div>
<div class="tr" style="top:241.87px"><span class="rn">18</span><span style="left:25.4px">18</span><span style="left:45.4px">25.0</span><span style="left:87.6px">Sophia ex</span><span style="left:154.2px">Finishe</span><span style="left:208.2px">5/2/2022 2:46:2</span><span style="left:291.4px">DB220074</span><span style="left:391.4px">Unknow</span><span style="left:449.8px">ORGANIC</span><span style="left:516.6px">ICS-3000<i>_</i>IC\SOPHIA SEQUENCE2</span></div>
<div class="tr" style="top:255.20px"><span class="rn">19</span><span style="left:25.4px">19</span><span style="left:45.4px">25.0</span><span style="left:87.6px">Sophia ex</span><span style="left:154.2px">Finishe</span><span style="left:208.2px">5/2/2022 3:13:1</span><span style="left:291.4px">DB220075</span><span style="left:391.4px">Unknow</span><span style="left:449.8px">ORGANIC</span><span style="left:516.6px">ICS-3000<i>_</i>IC\SOPHIA SEQUENCE2</span></div>
<div class="tr" style="top:268.53px"><span class="rn">20</span><span style="left:25.4px">20</span><span style="left:45.4px">25.0</span><span style="left:87.6px">Sophia ex</span><span style="left:154.2px">Finishe</span><span style="left:208.2px">5/2/2022 3:40:1</span><span style="left:291.4px">DB220076</span><span style="left:391.4px">Unknow</span><span style="left:449.8px">ORGANIC</span><span style="left:516.6px">ICS-3000<i>_</i>IC\SOPHIA SEQUENCE2</span></div>
<div class="tr" style="top:281.87px"><span class="rn">21</span><span style="left:25.4px">21</span><span style="left:45.4px">25.0</span><span style="left:87.6px">Sophia ex</span><span style="left:154.2px">Finishe</span><span style="left:208.2px">5/5/2022 10:17:</span><span style="left:291.4px">Standard</span><span style="left:391.4px">Unknow</span><span style="left:449.8px">ORGANIC</span><span style="left:516.6px">ICS-3000<i>_</i>IC\SOPHIA SEQUENCE2</span></div>
<div class="tr" style="top:295.20px"><span class="rn">22</span><span style="left:25.4px">22</span><span style="left:45.4px">25.0</span><span style="left:87.6px">Sophia ex</span><span style="left:154.2px">Finishe</span><span style="left:208.2px">5/5/2022 10:44:</span><span style="left:291.4px">DB220077</span><span style="left:391.4px">Unknow</span><span style="left:449.8px">ORGANIC</span><span style="left:516.6px">ICS-3000<i>_</i>IC\SOPHIA SEQUENCE2</span></div>
<div class="tr" style="top:308.53px"><span class="rn">23</span><span style="left:25.4px">23</span><span style="left:45.4px">25.0</span><span style="left:87.6px">Sophia ex</span><span style="left:154.2px">Finishe</span><span style="left:208.2px">5/5/2022 11:11:</span><span style="left:291.4px">DB220078</span><span style="left:391.4px">Unknow</span><span style="left:449.8px">ORGANIC</span><span style="left:516.6px">ICS-3000<i>_</i>IC\SOPHIA SEQUENCE2</span></div>
<div class="tr" style="top:321.87px"><span class="rn">24</span><span style="left:25.4px">24</span><span style="left:45.4px">25.0</span><span style="left:87.6px">Sophia ex</span><span style="left:154.2px">Finishe</span><span style="left:208.2px">5/11/2022 2:47:</span><span style="left:291.4px">standard</span><span style="left:391.4px">Unknow</span><span style="left:449.8px">ORGANIC</span><span style="left:516.6px">ICS-3000<i>_</i>IC\SOPHIA SEQUENCE2</span></div>
<div class="tr" style="top:335.20px"><span class="rn">25</span><span style="left:25.4px">25</span><span style="left:45.4px">25.0</span><span style="left:87.6px">Sophia ex</span><span style="left:154.2px">Finishe</span><span style="left:208.2px">5/11/2022 3:14:</span><span style="left:291.4px">DB220079</span><span style="left:391.4px">Unknow</span><span style="left:449.8px">ORGANIC</span><span style="left:516.6px">ICS-3000<i>_</i>IC\SOPHIA SEQUENCE2</span></div>
<div class="tr" style="top:348.53px"><span class="rn">26</span><span style="left:25.4px">26</span><span style="left:45.4px">25.0</span><span style="left:87.6px">Sophia ex</span><span style="left:154.2px">Finishe</span><span style="left:208.2px">5/11/2022 3:41:</span><span style="left:291.4px">DB220080</span><span style="left:391.4px">Unknow</span><span style="left:449.8px">ORGANIC</span><span style="left:516.6px">ICS-3000<i>_</i>IC\SOPHIA SEQUENCE2</span></div>
<div class="tr" style="top:361.87px"><span class="rn">27</span><span style="left:25.4px">27</span><span style="left:45.4px">25.0</span><span style="left:87.6px">Sophia ex</span><span style="left:154.2px">Finishe</span><span style="left:208.2px">5/17/2022 9:17:</span><span style="left:291.4px">standard</span><span style="left:391.4px">Unknow</span><span style="left:449.8px">ORGANIC</span><span style="left:516.6px">ICS-3000<i>_</i>IC\SOPHIA SEQUENCE2</span></div>
<div class="tr" style="top:375.20px"><span class="rn">28</span><span style="left:25.4px">28</span><span style="left:45.4px">25.0</span><span style="left:87.6px">Sophia ex</span><span style="left:154.2px">Finishe</span><span style="left:208.2px">5/17/2022 9:44:</span><span style="left:291.4px">DB220083</span><span style="left:391.4px">Unknow</span><span style="left:449.8px">ORGANIC</span><span style="left:516.6px">ICS-3000<i>_</i>IC\SOPHIA SEQUENCE2</span></div>
<div class="tr" style="top:388.53px"><span class="rn">29</span><span style="left:25.4px">29</span><span style="left:45.4px">25.0</span><span style="left:87.6px">Sophia ex</span><span style="left:154.2px">Finishe</span><span style="left:208.2px">5/18/2022 2:00:</span><span style="left:291.4px">standard</span><span style="left:391.4px">Unknow</span><span style="left:449.8px">ORGANIC</span><span style="left:516.6px">ICS-3000<i>_</i>IC\SOPHIA SEQUENCE2</span></div>
</div>
<div style="left:1563.500px;top:431px;width:13.500px;height:398.500px;background:#f0f0f0"></div>
<svg style="left:1567.500px;top:436.500px" width="6" height="4" viewBox="0 0 6 4"><path d="M0 3.800l3-3.400 3 3.400z" fill="#585858"/></svg>
<svg style="left:1567.500px;top:820.500px" width="6" height="4" viewBox="0 0 6 4"><path d="M0 .2l3 3.400 3-3.400z" fill="#585858"/></svg>
<div style="left:1564px;top:446.500px;width:13px;height:160px;border:1px solid #9a9a9a;border-radius:2px;background:linear-gradient(90deg,#f6f6f6,#e2e2e2 45%,#cfcfcf 55%,#dcdcdc)"></div>
<div style="left:1567px;top:523px;width:7px;height:1px;background:#6a6a6a;box-shadow:0 2px 0 #6a6a6a,0 4px 0 #6a6a6a"></div>
<!-- ================= STATUS BAR ================= -->
<div id="status">
  <div style="left:0;top:0;width:1600px;height:1px;background:#fafafa"></div>
  <span style="left:1.500px;top:4.500px;font-size:9.4px;line-height:12px;color:#111;letter-spacing:.2px">2.24 min, 92 mAU</span>
  <div style="left:1490px;top:2.500px;width:60px;height:15px;border-left:1px solid #a8a8a8;border-top:1px solid #b8b8b8;border-right:1px solid #fff"></div>
  <span style="left:1492px;top:4.500px;font-size:9.4px;line-height:12px;color:#111;letter-spacing:.2px">IonChromat</span>
  <div style="left:1551px;top:2.500px;width:24px;height:15px;border-left:1px solid #c4c4c4;border-top:1px solid #d0d0d0;border-right:1px solid #fff"></div>
  <div style="left:1576px;top:2.500px;width:22px;height:15px;border-left:1px solid #c4c4c4;border-top:1px solid #d0d0d0;border-right:1px solid #fff"></div>
</div>
<!-- ================= TASKBAR ================= -->
<div id="task">
  <div style="left:760px;top:2px;width:340px;height:32px;background:linear-gradient(105deg,rgba(110,150,225,0) 8%,rgba(110,150,225,.17) 30%,rgba(110,150,225,.06) 48%,rgba(110,150,225,.15) 66%,rgba(110,150,225,0) 90%)"></div>
  <!-- start orb -->
  <svg style="left:7px;top:2px" width="32" height="32" viewBox="0 0 32 32">
    <defs>
      <radialGradient id="orb" cx="50%" cy="92%" r="75%"><stop offset="0" stop-color="#58e0ff"/><stop offset=".35" stop-color="#1f9fe0"/><stop offset=".7" stop-color="#1f5c9c"/><stop offset="1" stop-color="#2a5a8c"/></radialGradient>
      <linearGradient id="orbh" x1="0" y1="0" x2="0" y2="1"><stop offset="0" stop-color="#d4deec" stop-opacity=".5"/><stop offset="1" stop-color="#b8cce4" stop-opacity=".12"/></linearGradient>
    </defs>
    <circle cx="15.800" cy="15.600" r="14.800" fill="url(#orb)" stroke="#86a4cc" stroke-width="1"/>
    <path d="M2.600 13a13.400 13.400 0 0 1 26.400 0c-6.500 3.600-19.900 3.600-26.400 0z" fill="url(#orbh)"/>
    <path d="M9.400 6.400c2.200-1.300 4.300-1.100 6.300.1l-1.500 7.300c-1.900-1.200-4-1.400-6.300-.1z" fill="#f0561e"/>
    <path d="M17 7.700c2 1.200 4.500 1.500 7.200.1l-1.500 7.300c-2.700 1.400-5.200 1.100-7.200-.1z" fill="#86c232"/>
    <path d="M7.600 15.400c2.200-1.300 4.300-1.100 6.300.1l-1.500 7.300c-1.900-1.200-4-1.400-6.300-.1z" fill="#3a9cee"/>
    <path d="M15.200 16.800c2 1.200 4.500 1.500 7.200.1l-1.500 7.300c-2.700 1.400-5.200 1.100-7.200-.1z" fill="#fcbc1e"/>
  </svg>
  <!-- IE -->
  <svg style="left:59px;top:2px" width="32" height="32" viewBox="0 0 32 32">
    <defs><linearGradient id="ieg" x1="0" y1="0" x2="0" y2="1"><stop offset="0" stop-color="#5cd4fc"/><stop offset="1" stop-color="#1c8ee4"/></linearGradient></defs>
    <path d="M24.200 16.600A8 8 0 1 0 22.800 21.300" fill="none" stroke="url(#ieg)" stroke-width="4.800"/>
    <path d="M9.500 16.800H26.400" stroke="#34b4f4" stroke-width="3.600"/>
    <path d="M27.200 3.600c-2.600-2.200-8.200-.2-13.600 4.800-5.400 5-9.600 11.800-8.600 15.800.7 2.600 3.600 3 7 1.600-2.800.5-4.600-.4-4.600-2.600 0-3.400 3.400-9.200 8.200-13.400 4.400-3.800 8.800-5.600 10.400-4 .7.900.4 2.200-.2 3.800 1.800-2.200 2.500-4.600 1.400-6z" fill="#f4cf1c" stroke="#c8a010" stroke-width=".3"/>
  </svg>
  <!-- Explorer -->
  <svg style="left:111px;top:5px" width="29" height="26" viewBox="0 0 29 26">
    <path d="M1.500 3.500c0-1 .6-1.600 1.600-1.600h7.400l2.200 2.400h13c1 0 1.600.6 1.600 1.600v17.600H1.500z" fill="#e9c660"/>
    <path d="M1.500 7h25.800v17H1.500z" fill="#fbe698"/>
    <path d="M3 2.600h2.400v1.600H3zM8.500 3h2.400v1.600H8.500z" fill="#7a6a20"/>
    <rect x="14.500" y="5.200" width="10" height="2.400" rx=".8" fill="#fdf6dc"/>
    <rect x="17.500" y="5.600" width="2.600" height="1.400" fill="#6a8ad0"/>
    <path d="M6 24v-7.200c0-1 .6-1.600 1.600-1.600h14c1 0 1.600.6 1.600 1.600V24h-4.400v-4.200H10.400V24z" fill="#74bff0"/>
    <path d="M6 16.800c0-1 .6-1.600 1.600-1.600h14c1 0 1.600.6 1.600 1.600v1.400H6z" fill="#a4d8f8"/>
  </svg>
  <!-- Excel -->
  <svg style="left:163px;top:4px" width="29" height="27" viewBox="0 0 29 27">
    <rect x="9" y="1" width="19" height="25" rx="1.500" fill="#1f9a55"/>
    <rect x="18.500" y="1" width="9.500" height="8.300" fill="#36c07a"/>
    <rect x="9" y="1" width="9.500" height="8.300" fill="#23a862"/>
    <rect x="18.500" y="9.300" width="9.500" height="8.300" fill="#1e9050"/>
    <rect x="9" y="9.300" width="9.500" height="8.300" fill="#127a3e"/>
    <rect x="9" y="17.600" width="19" height="8.400" fill="#0e6a34"/>
    <rect x="1" y="6.500" width="14" height="14" rx="1.500" fill="#117a3e"/>
    <text x="8" y="17.600" text-anchor="middle" font-family="Liberation Sans,sans-serif" font-weight="bold" font-size="11" fill="#fff">X</text>
  </svg>
  <!-- Word -->
  <svg style="left:214px;top:4px" width="29" height="27" viewBox="0 0 29 27">
    <rect x="9" y="1" width="19" height="25" rx="1.500" fill="#2d7be0"/>
    <rect x="9" y="1" width="19" height="6.300" fill="#48a2f0"/>
    <rect x="9" y="7.300" width="19" height="6.300" fill="#2f85e4"/>
    <rect x="9" y="13.600" width="19" height="6.300" fill="#1e64c4"/>
    <rect x="9" y="19.900" width="19" height="6.100" fill="#144ea6"/>
    <rect x="1" y="6.500" width="14" height="14" rx="1.500" fill="#1a56b8"/>
    <text x="8" y="17.600" text-anchor="middle" font-family="Liberation Sans,sans-serif" font-weight="bold" font-size="10.500" fill="#fff">W</text>
  </svg>
  <!-- Chrome -->
  <svg style="left:266px;top:3px" width="28" height="28" viewBox="0 0 28 28">
    <circle cx="14" cy="14" r="13" fill="#e0443a"/>
    <path d="M14 14L2.740 7.500A13 13 0 0 0 14 27l5.600-9.800z" fill="#2fa24f"/>
    <path d="M14 14l5.600 3.200L14 27A13 13 0 0 0 25.260 7.500H14z" fill="#fbc116"/>
    <path d="M14 14V7.500h11.260A13 13 0 0 0 2.740 7.500z" fill="#e0443a"/>
    <circle cx="14" cy="14" r="6" fill="#fff"/>
    <circle cx="14" cy="14" r="4.700" fill="#3b7ff0"/>
  </svg>
  <!-- Edge -->
  <svg style="left:318px;top:3px" width="28" height="28" viewBox="0 0 28 28">
    <defs><linearGradient id="edg" x1="0" y1="0" x2="1" y2="0"><stop offset="0" stop-color="#1a9ee0"/><stop offset=".6" stop-color="#2cc0c8"/><stop offset="1" stop-color="#5ad85a"/></linearGradient></defs>
    <path d="M14 1.500C7 1.500 1.500 7 1.500 14c.3-4.600 4.300-8 9.300-8 5 0 8.700 3 8.700 6.600 0 2-1.300 3.400-3 3.400-1.300 0-1.800-.6-1.800-.6 0 3.600 4.800 5.200 8 3.600 2.600-1.300 3.800-3.800 3.800-6.200C26.500 6.600 21 1.500 14 1.500z" fill="url(#edg)"/>
    <path d="M1.500 14c0 7 5.600 12.500 12.500 12.500 2.400 0 4.600-.7 6.500-1.800-1.400.5-3 .5-4.600-.2-3.400-1.400-5.600-4.600-5.600-8.100 0-2.600 1.600-4.600 3.300-5.400-5-1.400-11.700 1-12.100 3z" fill="#1464b8"/>
    <path d="M10.300 16.400c0 3.600 2.200 6.700 5.600 8.100 1.600.7 3.200.7 4.600.2 2.200-1.300 4-3.300 5-5.700-3.200 2.600-8.800 1.700-10.800-2.100-.3 0-.5-.3-.5-.3-2-.4-3.900-.8-3.900-.2z" fill="#0e4a96"/>
  </svg>
  <!-- Chromeleon active button -->
  <div style="left:359px;top:1.500px;width:50px;height:32px;background:#1c3276"></div>
  <div style="left:360px;top:2px;width:48px;height:31px;border:1px solid #a4aed8;border-top-color:#aab4dc;border-bottom-color:#7886c0;border-right-color:#8e9acc;background:linear-gradient(180deg,#99a6d2 0,#7a89bd 40%,#6474ae 55%,#5c6eaa 100%)"></div>
  <svg style="left:370px;top:4.500px" width="30" height="28" viewBox="0 0 30 28">
  <g>
    <ellipse cx="8.500" cy="6.200" rx="6.600" ry="4.600" transform="rotate(-28 8.500 6.200)" fill="#0a4a0c"/>
    <ellipse cx="17.400" cy="11" rx="9" ry="7" fill="#0c5a0e"/>
    <ellipse cx="11.500" cy="17.400" rx="6.600" ry="3.800" transform="rotate(-12 11.500 17.400)" fill="#0a4a0c"/>
    <path d="M21 8l1.600-6.600M22.500 8.500l4-5.200M23.500 10l5.200-2.600M23.500 12l5 .4M22.500 14l4 2.400" stroke="#0c300c" stroke-width="1.700"/>
    <path d="M21 8l1.500-5.800M22.500 8.500l3.600-4.600M23.500 10l4.600-2.200M23.500 12l4.400.4" stroke="#c8ec28" stroke-width=".9"/>
    <ellipse cx="8.300" cy="5.800" rx="5" ry="2.900" transform="rotate(-28 8.300 5.800)" fill="#22c422"/>
    <ellipse cx="17.600" cy="10.800" rx="7.200" ry="5.400" fill="#20d020"/>
    <ellipse cx="11.500" cy="17.200" rx="5" ry="2.300" transform="rotate(-12 11.500 17.200)" fill="#1cac1c"/>
    <path d="M3.400 9.600c2.200 2.600 5 3.800 8.600 3.800" fill="none" stroke="#0a3a0a" stroke-width="1.600"/>
    <path d="M10 9.400l1.900-3.600 1.900 3.600z" fill="#f05a18"/>
    <path d="M9.800 5.200l1.600-2 1.800 1.800z" fill="#501010"/>
    <circle cx="3" cy="18.400" r="2.300" fill="#8c1422"/>
    <path d="M4.600 13.200l2.400 2.200" stroke="#3a1450" stroke-width="1.800"/>
  </g>
    <path d="M20.800 14.200c1.800 1.100 3.600 1.100 5.200 0v6.400c0 2.800-2.400 4.600-5.200 5.600-2.800-1-5.200-2.800-5.200-5.600v-6.400c1.600 1.100 3.400 1.100 5.200 0z" fill="#e8ecf0" stroke="#9aa4b0" stroke-width=".5"/>
    <path d="M20.800 15.400v5h-4.200v-4.400c1.500.5 2.900.2 4.200-.6z" fill="#3a8ae0"/>
    <path d="M20.800 15.400v5h4.200v-4.400c-1.500.5-2.900.2-4.200-.6z" fill="#f4cc30"/>
    <path d="M20.800 20.400v4.600c-2.200-.8-3.900-2.400-4.200-4.600z" fill="#f4cc30"/>
    <path d="M20.800 20.400v4.600c2.200-.8 3.900-2.400 4.200-4.600z" fill="#3a8ae0"/>
  </svg>
  <!-- Links toolbar -->
  <span style="left:1117px;top:11.500px;font-size:9.4px;letter-spacing:.2px;line-height:12px;color:#fff">Links</span>
  <svg style="left:1146px;top:6px" width="12" height="12" viewBox="0 0 12 12"><rect x=".5" y=".5" width="11" height="11" fill="#e8eef8" stroke="#8898b8"/><circle cx="6" cy="6" r="3" fill="none" stroke="#6a7aa0" stroke-width="1.200"/><circle cx="6" cy="6" r="1" fill="#6a7aa0"/><path d="M1.500 2h9" stroke="#5a78c8" stroke-width="1.400"/></svg>
  <span style="left:1162px;top:6.500px;font-size:9.3px;letter-spacing:.12px;line-height:12px;color:#fff">Labcopy FTIR Laser PC.bat - Shortcut</span>
  <!-- tray -->
  <svg style="left:1452px;top:15px" width="8" height="5" viewBox="0 0 8 5"><path d="M.4 4.600L4 .6l3.600 4z" fill="#f4f6fc"/></svg>
  <svg style="left:1469px;top:11px" width="14" height="14" viewBox="0 0 14 14"><path d="M1 5h2.400L7 1.600v10.800L3.400 9H1z" fill="#f2f2f2" stroke="#9aa" stroke-width=".4"/><path d="M8.800 4.400c1.200 1.400 1.200 3.800 0 5.200M10.600 2.800c2 2.400 2 6 0 8.400" fill="none" stroke="#e8ecf4" stroke-width="1.100"/></svg>
  <svg style="left:1489px;top:11px" width="14" height="14" viewBox="0 0 14 14"><path d="M1.400 .6v13" stroke="#f4f4f4" stroke-width="1.300"/><path d="M2.200 1.400c2-1 3.400.8 6 0v5.400c-2.600.8-4-1-6 0z" fill="#f4f4f4"/><circle cx="9.200" cy="9.600" r="3.700" fill="#d82818"/><path d="M7.500 7.900l3.400 3.400M10.900 7.900l-3.400 3.400" stroke="#fff" stroke-width="1.300"/></svg>
  <svg style="left:1509px;top:11px" width="14" height="14" viewBox="0 0 14 14"><rect x="4" y="2" width="9" height="8" fill="#28282c" stroke="#c8ccd4" stroke-width=".8"/><rect x=".6" y=".8" width="4" height="4" fill="#e8e8e8" stroke="#888" stroke-width=".5"/><path d="M3 5v7h9" fill="none" stroke="#e4e4e4" stroke-width="1"/><rect x="5" y="8.500" width="8" height="3.500" fill="#d81818"/></svg>
  <span style="left:1536px;top:5.500px;width:44px;text-align:center;font-size:9.5px;letter-spacing:.15px;line-height:12px;color:#eef3ff">1:21 PM</span>
  <span style="left:1533px;top:19.600px;width:50px;text-align:center;font-size:9.5px;letter-spacing:.15px;line-height:12px;color:#eef3ff">8/13/2025</span>
  <div style="left:1589px;top:0;width:11px;height:34px;border-left:1px solid #1a2f6a;background:linear-gradient(90deg,#5f7fc0,#3e62b0 40%,#3458a6)"></div>
</div>
</body>
</html>
